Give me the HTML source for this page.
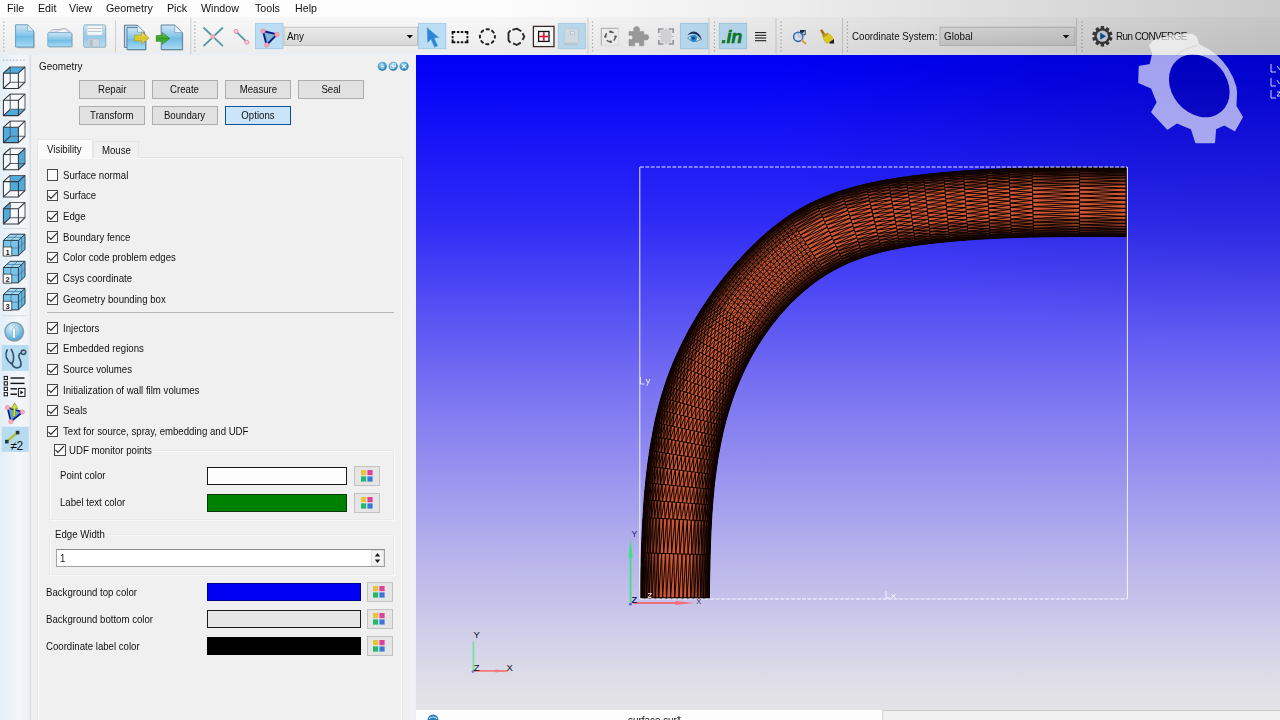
<!DOCTYPE html>
<html><head><meta charset="utf-8">
<style>
*{box-sizing:border-box;margin:0;padding:0}
html,body{width:1280px;height:720px;overflow:hidden;background:#f0f0f0}
body{font-family:"Liberation Sans",sans-serif;font-size:11px;color:#111;position:relative}
.abs{position:absolute}
.t{position:absolute;white-space:nowrap;line-height:12px;height:12px;transform:scaleX(.875);transform-origin:0 0}
#menubar{left:0;top:0;width:1280px;height:17px;background:#fdfdfd}
#toolbar{left:0;top:17px;width:1280px;height:38px;background:linear-gradient(#f7f7f7,#ececec)}
#shade{left:0;top:0;width:1280px;height:55px;background:linear-gradient(90deg,rgba(0,0,0,0) 0%,rgba(0,0,0,0) 38%,rgba(0,0,0,.06) 60%,rgba(0,0,0,.15) 85%,rgba(0,0,0,.2) 100%);pointer-events:none}
#sidebar{left:0;top:55px;width:31px;height:665px;background:linear-gradient(90deg,#e4eef7,#f3f7fb 60%,#eef1f4)}
#panel{left:31px;top:55px;width:385px;height:665px;background:#f0f0f0}
#viewport{left:416px;top:55px;width:864px;height:655px;background:radial-gradient(ellipse 520px 300px at 100% 0%,rgba(0,0,30,.2),rgba(0,0,30,.1) 50%,rgba(0,0,30,0) 100%),linear-gradient(#0000f6 0%,#0504f7 4%,#2e2af6 25%,#766ff2 50%,#b4b0ec 75%,#dcdbe8 94%,#e4e4e6 100%);overflow:hidden}
.btn{position:absolute;width:66px;height:19px;background:#e1e1e1;border:1px solid #adadad;text-align:center;line-height:17px}
.btn span{display:inline-block;transform:scaleX(.875)}
.btn.on{background:#cce4f7;border:1px solid #005499}
.hl{position:absolute;background:#cce4f7;border:1px solid #99c9ef}
.cb{position:absolute;width:11.5px;height:11.5px;background:#fafafa;border:1px solid #4a4a4a}
.sw{position:absolute;height:17.6px;border:1px solid #1a1a1a}
.cbtn{position:absolute;width:24px;height:19px;background:#e5e5e5;border:1px solid #c2c2c2}
.sep{position:absolute;width:1px;background:#c8c8c8}
.dots{position:absolute;width:1px;border-left:1px dotted #9a9a9a}
</style></head><body>
<div id="menubar" class="abs"></div>
<div id="toolbar" class="abs"></div>
<div id="sidebar" class="abs"></div>
<div id="panel" class="abs"></div>
<div id="viewport" class="abs"></div>
<div class="t" style="left:7px;top:1.5px;font-size:11.6px;transform:scaleX(.92)">File</div>
<div class="t" style="left:38px;top:1.5px;font-size:11.6px;transform:scaleX(.92)">Edit</div>
<div class="t" style="left:69px;top:1.5px;font-size:11.6px;transform:scaleX(.92)">View</div>
<div class="t" style="left:106px;top:1.5px;font-size:11.6px;transform:scaleX(.92)">Geometry</div>
<div class="t" style="left:167px;top:1.5px;font-size:11.6px;transform:scaleX(.92)">Pick</div>
<div class="t" style="left:201px;top:1.5px;font-size:11.6px;transform:scaleX(.92)">Window</div>
<div class="t" style="left:255px;top:1.5px;font-size:11.6px;transform:scaleX(.92)">Tools</div>
<div class="t" style="left:295px;top:1.5px;font-size:11.6px;transform:scaleX(.92)">Help</div>


<svg class="abs" style="left:0;top:0" width="1280" height="56" viewBox="0 0 1280 56">
<defs>
<linearGradient id="gdoc" x1="0" y1="0" x2="0" y2="1"><stop offset="0" stop-color="#cfe6f5"/><stop offset=".5" stop-color="#7fc4ea"/><stop offset=".52" stop-color="#6dbbe6"/><stop offset="1" stop-color="#a9daf3"/></linearGradient>
<linearGradient id="gfl" x1="0" y1="0" x2="0" y2="1"><stop offset="0" stop-color="#d4e6f3"/><stop offset=".5" stop-color="#94cbe9"/><stop offset="1" stop-color="#b5dcf1"/></linearGradient>
<linearGradient id="gcombo" x1="0" y1="0" x2="0" y2="1"><stop offset="0" stop-color="#ebebeb"/><stop offset="1" stop-color="#d6d6d6"/></linearGradient>
<linearGradient id="gyel" x1="0" y1="0" x2="0" y2="1"><stop offset="0" stop-color="#f3e88a"/><stop offset=".5" stop-color="#d8c523"/><stop offset="1" stop-color="#e9dc6a"/></linearGradient>
<linearGradient id="ggrn" x1="0" y1="0" x2="0" y2="1"><stop offset="0" stop-color="#8fd470"/><stop offset=".5" stop-color="#2f9e1e"/><stop offset="1" stop-color="#7ccb5e"/></linearGradient>
</defs>
<!-- toolbar bottom border -->
<rect x="0" y="52" width="1280" height="3" fill="#eceef6"/>
<!-- handle dots -->
<g stroke="#a8a8a8" stroke-width="1.2" stroke-dasharray="1.2 2.4">
<line x1="3.8" y1="21.5" x2="3.8" y2="51.5"/>
<line x1="194.8" y1="21.5" x2="194.8" y2="51.5"/>
<line x1="592.5" y1="21.5" x2="592.5" y2="51.5"/>
<line x1="714.5" y1="21.5" x2="714.5" y2="51.5"/>
<line x1="781" y1="21.5" x2="781" y2="51.5"/>
<line x1="847.5" y1="21.5" x2="847.5" y2="51.5"/>
<line x1="1082" y1="21.5" x2="1082" y2="51.5"/>
</g>
<g stroke="#cfcfcf" stroke-width="1">
<line x1="115.5" y1="20.5" x2="115.5" y2="52.5"/>
<line x1="190.8" y1="18" x2="190.8" y2="54"/>
<line x1="588" y1="18" x2="588" y2="54"/>
<line x1="709" y1="18" x2="709" y2="54"/>
<line x1="776" y1="18" x2="776" y2="54"/>
<line x1="842.5" y1="18" x2="842.5" y2="54"/>
<line x1="1076.5" y1="18" x2="1076.5" y2="54"/>
</g>
<!-- new doc -->
<g>
<path d="M16.5 26 h11.5 l6 6 v15.5 h-17.5z" fill="#5d7d8f" opacity=".45" transform="translate(.8,.8)"/>
<path d="M15.6 24.8 h11.9 l6.2 6.2 v16 h-18.1z" fill="url(#gdoc)" stroke="#6c9db9" stroke-width="1"/>
<path d="M27.5 24.8 v6.2 h6.2z" fill="#e4f1f9" stroke="#7aa7c0" stroke-width=".7"/>
</g>
<!-- open folder -->
<g>
<path d="M48.5 33 l4-3.5 h6 l6.5-1 5 3 v3z" fill="#dcebf5" stroke="#a9a3bd" stroke-width=".8"/>
<path d="M49 34 l16-5.5 5 5.5z" fill="#f4f8fb" stroke="#b8a8c0" stroke-width=".6"/>
<rect x="48.2" y="32.8" width="23.8" height="14" rx="1.2" fill="#5d7d8f" opacity=".4" transform="translate(.7,.8)"/>
<rect x="47.8" y="32.6" width="24" height="14" rx="1.2" fill="url(#gdoc)" stroke="#79a9c6" stroke-width=".9"/>
</g>
<!-- save floppy (disabled look) -->
<g>
<rect x="84.3" y="25.4" width="22" height="22.4" rx="1.5" fill="#7d97a6" opacity=".45"/>
<rect x="83.6" y="24.8" width="22" height="22.4" rx="1.5" fill="url(#gfl)" stroke="#8fb3c8" stroke-width=".9"/>
<rect x="87" y="25.6" width="15.5" height="9.5" fill="#f4f7f9" stroke="#b5c5cf" stroke-width=".6"/>
<line x1="88" y1="28.5" x2="101.5" y2="28.5" stroke="#b9c4cb" stroke-width=".9"/>
<line x1="88" y1="31.5" x2="101.5" y2="31.5" stroke="#b9c4cb" stroke-width=".9"/>
<rect x="88" y="39" width="11.5" height="7.8" fill="#c9d7e0" stroke="#a9bcc8" stroke-width=".6"/>
<rect x="89.5" y="40" width="3.2" height="6" fill="#aebfca"/>
</g>
<!-- import -->
<g>
<path d="M124.4 25.2 h13 l7 7 v15.2 h-20z" fill="#b5d8ee" stroke="#5f7f92" stroke-width="1"/>
<path d="M127 27.8 h12 l7 7 v15 h-19z" fill="#5d7d8f" opacity=".5" transform="translate(.6,.6)"/>
<path d="M127 27.6 h11.6 l7 7 v15 h-18.6z" fill="url(#gdoc)" stroke="#5f8299" stroke-width="1"/>
<path d="M137.4 25.2 v7 h7z" fill="#e9f3fa" stroke="#6f93a8" stroke-width=".6"/>
<path d="M134.6 35.2 h7 v-3 l7.4 5.8 -7.4 5.8 v-3 h-7z" fill="url(#gyel)" stroke="#b3a01a" stroke-width=".8"/>
</g>
<!-- export -->
<g>
<path d="M161.4 25.2 h13.5 l7.6 7.6 v17 h-21.1z" fill="#5d7d8f" opacity=".5" transform="translate(.7,.7)"/>
<path d="M161.2 25 h13.5 l7.6 7.6 v17 h-21.1z" fill="url(#gdoc)" stroke="#5f8299" stroke-width="1"/>
<path d="M174.7 25 v7.6 h7.6z" fill="#e4f1f9" stroke="#6f93a8" stroke-width=".6"/>
<path d="M156.3 35.6 h6 v-3 l7.4 5.8 -7.4 5.8 v-3 h-6z" fill="url(#ggrn)" stroke="#2c8a1d" stroke-width=".8"/>
</g>
<!-- X icon -->
<g stroke="#4f9aa8" stroke-width="1.8" stroke-linecap="round">
<line x1="204" y1="28" x2="222.4" y2="45.6"/><line x1="222.4" y1="28" x2="204" y2="45.6"/>
</g>
<rect x="210.6" y="34.4" width="4.2" height="4.2" fill="#f7a6b6"/>
<!-- line icon -->
<line x1="236" y1="31.4" x2="246.8" y2="42.2" stroke="#4f9aa8" stroke-width="1.8"/>
<circle cx="236" cy="31.4" r="2" fill="#fbd0d8" stroke="#f08aa0" stroke-width="1"/>
<circle cx="246.8" cy="42.2" r="2" fill="#fbd0d8" stroke="#f08aa0" stroke-width="1"/>
<!-- triangle icon hl -->
<rect x="255.5" y="23.4" width="27.5" height="25.2" fill="#bcdef4" stroke="#a3cdeb" stroke-width="1"/>
<path d="M263 31 L277 34.4 L266.6 45z" fill="#7fb5d2" stroke="#0a1a8c" stroke-width="1.9" stroke-linejoin="round"/>
<circle cx="263" cy="31" r="2.3" fill="#f6a6b8" stroke="#ee8098" stroke-width=".6"/>
<circle cx="277" cy="34.4" r="2.3" fill="#f6a6b8" stroke="#ee8098" stroke-width=".6"/>
<circle cx="266.6" cy="45" r="2.3" fill="#f6a6b8" stroke="#ee8098" stroke-width=".6"/>
<!-- combo Any -->
<rect x="284" y="27.2" width="133.5" height="18.3" fill="url(#gcombo)" stroke="#c2c2c2" stroke-width="1"/>
<path d="M406.6 35 h6.4 l-3.2 3.4z" fill="#111"/>

<!-- pointer hl -->
<rect x="418.5" y="23.4" width="27.3" height="25.2" fill="#bcdef4" stroke="#a3cdeb" stroke-width="1"/>
<path d="M427.2 27.8 L427.6 42.4 L431 39.2 L434.6 47.2 L437.6 45.8 L434 38 L438.6 37.6z" fill="#2b84d6" stroke="#4b9ade" stroke-width=".6"/>
<!-- dashed rect -->
<g fill="none" stroke="#111" stroke-width="1.9">
<path d="M452.600 34.600 V32 H455.300 M464.700 32 H467.400 V34.600 M467.400 39.600 V42.200 H464.700 M455.300 42.200 H452.600 V39.600"/>
<path d="M456.900 32 H459.300 M460.800 32 H463.200 M456.900 42.200 H459.300 M460.800 42.200 H463.200 M452.600 36 V38.200 M467.400 36 V38.200"/>
</g>
<!-- dashed circle -->
<circle cx="487.400" cy="36.700" r="7.500" fill="none" stroke="#1c1c1c" stroke-width="1.900" stroke-dasharray="3.850 2.040" stroke-dashoffset="1.900"/>
<!-- dashed polygon -->
<g fill="none" stroke="#262626" stroke-width="1.850" stroke-linejoin="round">
<path d="M510.500 30.400 L508.500 32.800 V40.300 L510.500 42.700"/>
<path d="M512.400 29.900 L516.800 28.600 L521.300 31.200"/>
<path d="M522.500 33.200 L524.300 36.600 L522.500 40"/>
<path d="M513.100 43.300 L516.800 45 L520.800 42.600"/>
</g>
<!-- red cross box -->
<rect x="533.4" y="26.4" width="20.6" height="20.2" fill="#fbfbfb" stroke="#3a2a22" stroke-width="1.3"/>
<g stroke="#c9c9c9" stroke-width=".6"><line x1="534" y1="27" x2="538.5" y2="31.5"/><line x1="553.4" y1="27" x2="549" y2="31.5"/><line x1="534" y1="46" x2="538.5" y2="41.4"/><line x1="553.4" y1="46" x2="549" y2="41.4"/></g>
<rect x="538.6" y="31.5" width="10.4" height="9.9" fill="#fff" stroke="#111" stroke-width="1.3"/>
<line x1="543.8" y1="32.2" x2="543.8" y2="40.8" stroke="#e8123c" stroke-width="1.7"/><line x1="539.3" y1="36.5" x2="548.3" y2="36.5" stroke="#e8123c" stroke-width="1.7"/>
<!-- disabled hl -->
<rect x="558.3" y="23.4" width="27.3" height="25.2" fill="#bcdaee" stroke="#a9cfe9" stroke-width="1"/>
<path d="M565 30 q.5-1.6 2-1.6 h9 q2 0 2.2 2 l.6 13 q0 1.6 -1.6 1.6 h-12 q-1.6 0 -1.4-1.6z" fill="#d3dde6" stroke="#b9c9d6" stroke-width=".7"/>
<rect x="570.6" y="31.2" width="3.6" height="3" fill="#e9eff4" stroke="#a9b6c2" stroke-width=".6"/>
<rect x="564" y="42.6" width="13.5" height="2.4" fill="#b5c7d5" opacity=".8"/>
<!-- rotate gray -->
<path d="M601.3 45.4 V28.3 H618.6" fill="none" stroke="#a3a3a3" stroke-width="1"/>
<rect x="601.8" y="28.8" width="16.8" height="16.6" fill="#efefef" opacity=".7"/>
<path d="M601.8 45.4 H618.6 V28.8" fill="none" stroke="#dcdcdc" stroke-width=".8"/>
<g fill="none" stroke="#5e5e5e" stroke-width="1.5" stroke-dasharray="4.2 3.2"><circle cx="610.4" cy="36.8" r="5"/></g>
<g fill="#5a5a5a"><circle cx="605.4" cy="36.6" r="1.2"/><circle cx="615.6" cy="36.6" r="1.2"/><circle cx="610.4" cy="31.8" r="1.2"/><circle cx="610.8" cy="41.8" r="1.2"/></g>
<!-- puzzle -->
<path d="M629 31.6 h5 q-1.6-4.6 2.6-5 q4.2.4 2.6 5 h4.6 v3.4 q4.6-1.6 5 2.2 q-.4 4 -5 2.4 v6.2 h-4.4 q1.2-3.4 -2.4-3.6 q-3.4.2 -2.2 3.6 h-5.8 v-6.6 q3.6 1.4 3.8-1.8 q-.2-3.2 -3.8-1.8z" fill="#9d9d9d" stroke="#8f8f8f" stroke-width=".5"/>
<!-- dashed gray -->
<rect x="660.4" y="30.2" width="11" height="12.4" fill="#d9d9dd"/>
<g fill="none" stroke="#9c98a4" stroke-width="1.7"><path d="M658.8 33 v-4 h4.6"/><path d="M668.6 29 h4.6 v4"/><path d="M673.2 40 v4 h-4.6"/><path d="M663.4 44 h-4.6 v-4"/></g>
<g stroke="#b9b6c0" stroke-width="1"><line x1="666" y1="28.6" x2="666" y2="31"/><line x1="666" y1="42" x2="666" y2="44.4"/><line x1="658.6" y1="36.5" x2="660.6" y2="36.5"/><line x1="671.4" y1="36.5" x2="673.6" y2="36.5"/></g>
<!-- eye hl -->
<rect x="680.4" y="23.4" width="27.4" height="25.2" fill="#bcdef4" stroke="#a3cdeb" stroke-width="1"/>
<path d="M687.6 38.2 q6.4-5.6 12.6 1.4 q-6 4.6 -12.6-1.4z" fill="#eef6fb" stroke="#3b6f9e" stroke-width=".7"/>
<circle cx="693.6" cy="38.4" r="3.3" fill="#1d8ddc"/><circle cx="693.4" cy="38.2" r="1.3" fill="#0c3a6c"/>
<path d="M687.4 35.4 q4-5.4 9.2-3.2 q4.4 2.4 5.2 8.600 q-1.600-4.200 -5.200-6 q-4.800-2.200 -9.200.6z" fill="#1a3560"/>
<!-- .in hl -->
<rect x="719.3" y="23.4" width="27.4" height="25.2" fill="#bcdef4" stroke="#a3cdeb" stroke-width="1"/>
<text x="721.6" y="43.3" font-family="Liberation Sans" font-weight="bold" font-style="italic" font-size="18" fill="#0b7a2c" stroke="#0b7a2c" stroke-width=".5" letter-spacing="-.2">.in</text>
<!-- menu lines -->
<g stroke="#151515" stroke-width="1.05"><line x1="755" y1="32.6" x2="766.2" y2="32.6"/><line x1="755" y1="35.3" x2="766.2" y2="35.3"/><line x1="755" y1="38" x2="766.2" y2="38"/><line x1="755" y1="40.700" x2="766.2" y2="40.700"/></g>
<!-- search -->
<rect x="800" y="30" width="5.6" height="5.2" fill="#1e2a3c"/>
<path d="M801 34.600 l3.800-3.800 v3.800z" fill="#bcd4ea"/>
<circle cx="798.2" cy="36.800" r="4.600" fill="#e6eef8" fill-opacity=".85" stroke="#2b6cc9" stroke-width="1.5"/>
<path d="M798.200 32.400 v4.400 h4.400" fill="none" stroke="#9fb9dc" stroke-width=".8"/>
<line x1="801.800" y1="40.200" x2="805.600" y2="43.400" stroke="#e9a44a" stroke-width="1.900" stroke-linecap="round"/>
<!-- broom -->
<path d="M829.500 39 l4.500 0 0 4.500 -4.500 0z" fill="#16161e"/>
<path d="M820 30.200 l2.200-1 3 4.800 -2.400 1.200z" fill="#b8741c"/>
<path d="M822.400 35.400 l4.800-2.400 q4.600 1.600 6.200 6.400 l-6.600 4.200 q-3.400-3.400 -4.400-8.200z" fill="#e9da22" stroke="#cdb81a" stroke-width=".6"/>
<path d="M822.600 35.600 l4.600-2.400 1 1.400 -4.800 2.600z" fill="#c99a1c"/>
<!-- coord combo -->
<rect x="940" y="27.200" width="135" height="18.300" fill="url(#gcombo)" stroke="#c2c2c2" stroke-width="1"/>
<path d="M1062.800 35 h6.400 l-3.200 3.400z" fill="#111"/>
<!-- run gear -->
<g transform="translate(1102.400,36.200)">
<g fill="#3f3f3f">
<circle r="8" />
<rect x="-1.7" y="-10.2" width="3.4" height="3.6" rx=".5" transform="rotate(0)"/><rect x="-1.7" y="-10.2" width="3.4" height="3.6" rx=".5" transform="rotate(36)"/><rect x="-1.7" y="-10.2" width="3.4" height="3.6" rx=".5" transform="rotate(72)"/><rect x="-1.7" y="-10.2" width="3.4" height="3.6" rx=".5" transform="rotate(108)"/><rect x="-1.7" y="-10.2" width="3.4" height="3.6" rx=".5" transform="rotate(144)"/><rect x="-1.7" y="-10.2" width="3.4" height="3.6" rx=".5" transform="rotate(180)"/><rect x="-1.7" y="-10.2" width="3.4" height="3.6" rx=".5" transform="rotate(216)"/><rect x="-1.7" y="-10.2" width="3.4" height="3.6" rx=".5" transform="rotate(252)"/><rect x="-1.7" y="-10.2" width="3.4" height="3.6" rx=".5" transform="rotate(288)"/><rect x="-1.7" y="-10.2" width="3.4" height="3.6" rx=".5" transform="rotate(324)"/>
</g>
<circle r="5.600" fill="#dfeaf4"/>
<path d="M-2.200 -3.600 L3.600 0 L-2.200 3.600z" fill="#155a9e"/>
</g>

</svg>
<div class="t" style="left:287px;top:29.9px;font-size:10.7px;transform:scaleX(.925)">Any</div>
<div class="t" style="left:852px;top:29.9px;font-size:10.7px;transform:scaleX(.91)">Coordinate System:</div>
<div class="t" style="left:943.500px;top:29.9px;font-size:10.7px;transform:scaleX(.925)">Global</div>
<div class="t" style="left:1116px;top:29.9px;font-size:10.7px;transform:scaleX(.925);letter-spacing:-.6px">Run CONVERGE</div>


<svg class="abs" style="left:0;top:55px" width="32" height="665" viewBox="0 55 32 665">
<defs><radialGradient id="ginfo" cx=".4" cy=".3" r=".8"><stop offset="0" stop-color="#e9f5fc"/><stop offset=".5" stop-color="#8ccaea"/><stop offset="1" stop-color="#3f9bd0"/></radialGradient></defs><line x1="30.3" y1="55" x2="30.3" y2="720" stroke="#d3dbe3" stroke-width="1.2"/><line x1="3" y1="60.2" x2="27" y2="60.2" stroke="#a9adb2" stroke-width="1.2" stroke-dasharray="1.2 2.2"/><polygon points="3.4,73.2 10.2,67.0 25.0,67.0 25.0,82.2 18.4,88.5 3.4,88.5" fill="#f7fafc" fill-opacity=".8"/><polygon points="3.4,73.2 10.2,67.0 25.0,67.0 18.4,73.2" fill="#4fabdc"/><g fill="none" stroke="#33373b" stroke-width="1.05" stroke-linejoin="round"><polygon points="10.2,67.0 25.0,67.0 25.0,82.2 10.2,82.2" stroke="#5a6066"/><polygon points="3.4,73.2 18.4,73.2 18.4,88.5 3.4,88.5"/><line x1="3.4" y1="73.2" x2="10.2" y2="67.0"/><line x1="18.4" y1="73.2" x2="25.0" y2="67.0"/><line x1="18.4" y1="88.5" x2="25.0" y2="82.2"/><line x1="3.4" y1="88.5" x2="10.2" y2="82.2"/></g>
<polygon points="3.4,100.3 10.2,94.1 25.0,94.1 25.0,109.3 18.4,115.6 3.4,115.6" fill="#f7fafc" fill-opacity=".8"/><polygon points="3.4,115.6 10.2,109.3 25.0,109.3 18.4,115.6" fill="#4fabdc"/><g fill="none" stroke="#33373b" stroke-width="1.05" stroke-linejoin="round"><polygon points="10.2,94.1 25.0,94.1 25.0,109.3 10.2,109.3" stroke="#5a6066"/><polygon points="3.4,100.3 18.4,100.3 18.4,115.6 3.4,115.6"/><line x1="3.4" y1="100.3" x2="10.2" y2="94.1"/><line x1="18.4" y1="100.3" x2="25.0" y2="94.1"/><line x1="18.4" y1="115.6" x2="25.0" y2="109.3"/><line x1="3.4" y1="115.6" x2="10.2" y2="109.3"/></g>
<polygon points="3.4,127.3 10.2,121.1 25.0,121.1 25.0,136.3 18.4,142.6 3.4,142.6" fill="#f7fafc" fill-opacity=".8"/><polygon points="3.4,127.3 18.4,127.3 18.4,142.6 3.4,142.6" fill="#4fabdc"/><g fill="none" stroke="#33373b" stroke-width="1.05" stroke-linejoin="round"><polygon points="10.2,121.1 25.0,121.1 25.0,136.3 10.2,136.3" stroke="#5a6066"/><polygon points="3.4,127.3 18.4,127.3 18.4,142.6 3.4,142.6"/><line x1="3.4" y1="127.3" x2="10.2" y2="121.1"/><line x1="18.4" y1="127.3" x2="25.0" y2="121.1"/><line x1="18.4" y1="142.6" x2="25.0" y2="136.3"/><line x1="3.4" y1="142.6" x2="10.2" y2="136.3"/></g>
<polygon points="3.4,154.5 10.2,148.3 25.0,148.3 25.0,163.5 18.4,169.8 3.4,169.8" fill="#f7fafc" fill-opacity=".8"/><polygon points="18.4,154.5 25.0,148.3 25.0,163.5 18.4,169.8" fill="#4fabdc"/><g fill="none" stroke="#33373b" stroke-width="1.05" stroke-linejoin="round"><polygon points="10.2,148.3 25.0,148.3 25.0,163.5 10.2,163.5" stroke="#5a6066"/><polygon points="3.4,154.5 18.4,154.5 18.4,169.8 3.4,169.8"/><line x1="3.4" y1="154.5" x2="10.2" y2="148.3"/><line x1="18.4" y1="154.5" x2="25.0" y2="148.3"/><line x1="18.4" y1="169.8" x2="25.0" y2="163.5"/><line x1="3.4" y1="169.8" x2="10.2" y2="163.5"/></g>
<polygon points="3.4,181.6 10.2,175.4 25.0,175.4 25.0,190.6 18.4,196.9 3.4,196.9" fill="#f7fafc" fill-opacity=".8"/><polygon points="10.2,175.4 25.0,175.4 25.0,190.6 10.2,190.6" fill="#4fabdc"/><g fill="none" stroke="#33373b" stroke-width="1.05" stroke-linejoin="round"><polygon points="10.2,175.4 25.0,175.4 25.0,190.6 10.2,190.6" stroke="#5a6066"/><polygon points="3.4,181.6 18.4,181.6 18.4,196.9 3.4,196.9"/><line x1="3.4" y1="181.6" x2="10.2" y2="175.4"/><line x1="18.4" y1="181.6" x2="25.0" y2="175.4"/><line x1="18.4" y1="196.9" x2="25.0" y2="190.6"/><line x1="3.4" y1="196.9" x2="10.2" y2="190.6"/></g>
<polygon points="3.4,208.7 10.2,202.5 25.0,202.5 25.0,217.7 18.4,224.0 3.4,224.0" fill="#f7fafc" fill-opacity=".8"/><polygon points="3.4,208.7 10.2,202.5 10.2,217.7 3.4,224.0" fill="#4fabdc"/><g fill="none" stroke="#33373b" stroke-width="1.05" stroke-linejoin="round"><polygon points="10.2,202.5 25.0,202.5 25.0,217.7 10.2,217.7" stroke="#5a6066"/><polygon points="3.4,208.7 18.4,208.7 18.4,224.0 3.4,224.0"/><line x1="3.4" y1="208.7" x2="10.2" y2="202.5"/><line x1="18.4" y1="208.7" x2="25.0" y2="202.5"/><line x1="18.4" y1="224.0" x2="25.0" y2="217.7"/><line x1="3.4" y1="224.0" x2="10.2" y2="217.7"/></g>
<line x1="3" y1="228.5" x2="27" y2="228.5" stroke="#d5d9dd" stroke-width="1"/><polygon points="3.4,240.4 10.2,234.2 25.0,234.2 25.0,249.4 18.4,255.7 3.4,255.7" fill="#7cc4ea"/><polygon points="3.4,240.4 10.2,234.2 25.0,234.2 18.4,240.4" fill="#a5d9f2"/><polygon points="18.4,240.4 25.0,234.2 25.0,249.4 18.4,255.7" fill="#66b6e0"/><g fill="none" stroke="#3a7296" stroke-width=".7"><line x1="10.9" y1="240.39999999999998" x2="10.9" y2="255.7"/><line x1="3.4" y1="248.0" x2="18.4" y2="248.0"/><line x1="6.8" y1="237.29999999999998" x2="21.7" y2="237.29999999999998"/><line x1="10.9" y1="240.39999999999998" x2="17.7" y2="234.2"/><line x1="21.7" y1="237.29999999999998" x2="21.7" y2="252.6"/><line x1="18.4" y1="248.0" x2="25.0" y2="241.79999999999998"/></g><g fill="none" stroke="#2f3f4a" stroke-width="1" stroke-linejoin="round"><polygon points="3.4,240.4 10.2,234.2 25.0,234.2 25.0,249.4 18.4,255.7 3.4,255.7"/><polyline points="3.4,240.4 18.4,240.4 18.4,255.7"/><line x1="18.4" y1="240.39999999999998" x2="25.0" y2="234.2"/></g><rect x="3.1999999999999997" y="247.0" width="8.6" height="9" fill="#fff" stroke="#3a3a3a" stroke-width=".8"/><text x="7.5" y="254.5" font-family="Liberation Sans" font-weight="bold" font-size="7.5" text-anchor="middle" fill="#222">1</text>
<polygon points="3.4,267.5 10.2,261.3 25.0,261.3 25.0,276.5 18.4,282.8 3.4,282.8" fill="#7cc4ea"/><polygon points="3.4,267.5 10.2,261.3 25.0,261.3 18.4,267.5" fill="#a5d9f2"/><polygon points="18.4,267.5 25.0,261.3 25.0,276.5 18.4,282.8" fill="#66b6e0"/><g fill="none" stroke="#3a7296" stroke-width=".7"><line x1="10.9" y1="267.5" x2="10.9" y2="282.8"/><line x1="3.4" y1="275.1" x2="18.4" y2="275.1"/><line x1="6.8" y1="264.40000000000003" x2="21.7" y2="264.40000000000003"/><line x1="10.9" y1="267.5" x2="17.7" y2="261.3"/><line x1="21.7" y1="264.40000000000003" x2="21.7" y2="279.7"/><line x1="18.4" y1="275.1" x2="25.0" y2="268.90000000000003"/></g><g fill="none" stroke="#2f3f4a" stroke-width="1" stroke-linejoin="round"><polygon points="3.4,267.5 10.2,261.3 25.0,261.3 25.0,276.5 18.4,282.8 3.4,282.8"/><polyline points="3.4,267.5 18.4,267.5 18.4,282.8"/><line x1="18.4" y1="267.5" x2="25.0" y2="261.3"/></g><rect x="3.1999999999999997" y="274.1" width="8.6" height="9" fill="#fff" stroke="#3a3a3a" stroke-width=".8"/><text x="7.5" y="281.6" font-family="Liberation Sans" font-weight="bold" font-size="7.5" text-anchor="middle" fill="#222">2</text>
<polygon points="3.4,294.6 10.2,288.4 25.0,288.4 25.0,303.6 18.4,309.9 3.4,309.9" fill="#7cc4ea"/><polygon points="3.4,294.6 10.2,288.4 25.0,288.4 18.4,294.6" fill="#a5d9f2"/><polygon points="18.4,294.6 25.0,288.4 25.0,303.6 18.4,309.9" fill="#66b6e0"/><g fill="none" stroke="#3a7296" stroke-width=".7"><line x1="10.9" y1="294.59999999999997" x2="10.9" y2="309.9"/><line x1="3.4" y1="302.2" x2="18.4" y2="302.2"/><line x1="6.8" y1="291.5" x2="21.7" y2="291.5"/><line x1="10.9" y1="294.59999999999997" x2="17.7" y2="288.4"/><line x1="21.7" y1="291.5" x2="21.7" y2="306.79999999999995"/><line x1="18.4" y1="302.2" x2="25.0" y2="296.0"/></g><g fill="none" stroke="#2f3f4a" stroke-width="1" stroke-linejoin="round"><polygon points="3.4,294.6 10.2,288.4 25.0,288.4 25.0,303.6 18.4,309.9 3.4,309.9"/><polyline points="3.4,294.6 18.4,294.6 18.4,309.9"/><line x1="18.4" y1="294.59999999999997" x2="25.0" y2="288.4"/></g><rect x="3.1999999999999997" y="301.2" width="8.6" height="9" fill="#fff" stroke="#3a3a3a" stroke-width=".8"/><text x="7.5" y="308.7" font-family="Liberation Sans" font-weight="bold" font-size="7.5" text-anchor="middle" fill="#222">3</text>
<line x1="3" y1="315.8" x2="27" y2="315.8" stroke="#d5d9dd" stroke-width="1"/><circle cx="14.4" cy="332" r="9.9" fill="#6f8a99" opacity=".55"/><circle cx="14.100" cy="331.500" r="9.200" fill="url(#ginfo)" stroke="#7f99a6" stroke-width="1.100"/><rect x="12.600" y="328" width="2.900" height="10" rx=".8" fill="#fbfdfe" stroke="#5a9ac4" stroke-width=".5"/><circle cx="14" cy="325.400" r="1.600" fill="#fbfdfe" stroke="#5a9ac4" stroke-width=".5"/><rect x="1.7" y="345" width="27" height="25.8" fill="#b7dbf1"/><g fill="none" stroke="#35566e" stroke-width="1.7" stroke-linecap="round"><path d="M7.100 350 C4.800 354.500 6 360 12 364"/><path d="M11.300 349.600 C14 353.500 14.500 360 12 364"/><path d="M12 364 C13 367.500 17 369 20 366.900 C22.800 364 20 360.300 18.900 356.900 C18.500 354.600 19.800 353.200 21.300 353"/><circle cx="23.500" cy="352.300" r="2.200" fill="#b9d3e3"/></g><circle cx="24.500" cy="351.300" r=".8" fill="#e87a9a"/><rect x="4.200" y="376.4" width="3.200" height="3.200" fill="#fff" stroke="#111" stroke-width="1"/><line x1="10.500" y1="378" x2="24.5" y2="378" stroke="#111" stroke-width="1.400"/><rect x="4.200" y="381.79999999999995" width="3.200" height="3.200" fill="#fff" stroke="#111" stroke-width="1"/><line x1="10.500" y1="383.4" x2="24.5" y2="383.4" stroke="#111" stroke-width="1.400"/><rect x="4.200" y="387.2" width="3.200" height="3.200" fill="#fff" stroke="#111" stroke-width="1"/><line x1="10.500" y1="388.8" x2="17" y2="388.8" stroke="#111" stroke-width="1.400"/><rect x="4.200" y="392.59999999999997" width="3.200" height="3.200" fill="#fff" stroke="#111" stroke-width="1"/><line x1="10.500" y1="394.2" x2="17" y2="394.2" stroke="#111" stroke-width="1.400"/><rect x="18.400" y="388.400" width="6.600" height="8" fill="#fff" stroke="#111" stroke-width="1"/><path d="M20.400 390.200 l3 2.200 -3 2.200z" fill="#111"/><path d="M7.500 407.600 L22.500 412 L10.900 421.600z" fill="#6aa6cf" stroke="#0a1a8c" stroke-width="1.800" stroke-linejoin="round"/><path d="M12.800 416.500 l0.600-8 -2.200 0 3.600-5.600 3 5.600 -2.200 0 -0.400 8z" fill="#d9e03a" stroke="#6f9a2a" stroke-width=".7"/><circle cx="7.5" cy="407.6" r="2.300" fill="#f8aebd" stroke="#ee8098" stroke-width=".5"/><circle cx="22.5" cy="412" r="2.300" fill="#f8aebd" stroke="#ee8098" stroke-width=".5"/><circle cx="10.9" cy="421.6" r="2.300" fill="#f8aebd" stroke="#ee8098" stroke-width=".5"/><rect x="1.700" y="426.700" width="27" height="25.200" fill="#b7dbf1"/><line x1="7" y1="441.600" x2="17.400" y2="432.600" stroke="#b9d24a" stroke-width="2.600"/><line x1="7" y1="441.600" x2="17.400" y2="432.600" stroke="#6f9a2a" stroke-width=".6"/><rect x="5" y="439.800" width="3.600" height="3.600" fill="#27384a"/><rect x="15.800" y="430.800" width="3.600" height="3.600" fill="#27384a"/><text x="10.400" y="450.200" font-family="Liberation Sans" font-size="12" fill="#111" letter-spacing="-.6">≠2</text></svg>

<div class="t" style="left:39px;top:60.2px;font-size:10.7px;transform:scaleX(.925)">Geometry</div>
<svg class="abs" style="left:376px;top:60px" width="36" height="13" viewBox="376 60 36 13">
<defs><radialGradient id="gtb" cx=".4" cy=".3" r=".8"><stop offset="0" stop-color="#9fd3ea"/><stop offset=".6" stop-color="#3f95c4"/><stop offset="1" stop-color="#2a78a8"/></radialGradient></defs>
<circle cx="382.3" cy="66.3" r="4.6" fill="url(#gtb)"/><circle cx="393.2" cy="66.3" r="4.600" fill="url(#gtb)"/><circle cx="404.100" cy="66.300" r="4.600" fill="url(#gtb)"/>
<path d="M380.600 65 h3.600 m-3.600 1.500 h3.600 m-3.600 1.500 h3.600" stroke="#e6f3fa" stroke-width=".8" fill="none"/>
<rect x="390.800" y="65.200" width="3.200" height="3" fill="none" stroke="#eef7fb" stroke-width=".8"/><rect x="392.400" y="63.800" width="3.200" height="3" fill="none" stroke="#eef7fb" stroke-width=".8"/>
<path d="M402 64.200 l4.200 4.200 m0-4.200 l-4.200 4.200" stroke="#f2f9fc" stroke-width="1.100" fill="none"/>
</svg>
<div class="btn" style="left:79px;top:80px"><span>Repair</span></div>
<div class="btn" style="left:152px;top:80px"><span>Create</span></div>
<div class="btn" style="left:225px;top:80px"><span>Measure</span></div>
<div class="btn" style="left:298px;top:80px"><span>Seal</span></div>
<div class="btn" style="left:79px;top:106px"><span>Transform</span></div>
<div class="btn" style="left:152px;top:106px"><span>Boundary</span></div>
<div class="btn on" style="left:225px;top:106px"><span>Options</span></div>
<div class="abs" style="left:37px;top:157px;width:366px;height:570px;border:1px solid #e4e4e4;border-top-color:#e0e0e0;background:#f0f0f0;box-shadow:inset 1px 1px 0 #fbfbfb,inset -1px 0 0 #fbfbfb"></div>
<div class="abs" style="left:93px;top:141px;width:46px;height:16.5px;background:#f0f0f0;border:1px solid #e5e5e5;border-bottom:none"></div>
<div class="abs" style="left:37px;top:139px;width:56px;height:19.5px;background:#fbfbfb;border:1px solid #e6e6e6;border-bottom:none"></div>
<div class="t" style="left:47px;top:143px">Visibility</div>
<div class="t" style="left:101.5px;top:144px">Mouse</div>
<div class="cb" style="left:46.8px;top:169.2px"></div><div class="t" style="left:62.5px;top:168.7px">Surface normal</div>
<div class="cb" style="left:46.8px;top:189.8px"><svg width="10" height="10" viewBox="0 0 10 10" style="position:absolute;left:0;top:0"><path d="M0.400 4.900 L2.900 7.400 L9 1.200" fill="none" stroke="#2a2a2a" stroke-width="1.150"/></svg></div><div class="t" style="left:62.5px;top:189.3px">Surface</div>
<div class="cb" style="left:46.8px;top:210.5px"><svg width="10" height="10" viewBox="0 0 10 10" style="position:absolute;left:0;top:0"><path d="M0.400 4.900 L2.900 7.400 L9 1.200" fill="none" stroke="#2a2a2a" stroke-width="1.150"/></svg></div><div class="t" style="left:62.5px;top:210.0px">Edge</div>
<div class="cb" style="left:46.8px;top:231.2px"><svg width="10" height="10" viewBox="0 0 10 10" style="position:absolute;left:0;top:0"><path d="M0.400 4.900 L2.900 7.400 L9 1.200" fill="none" stroke="#2a2a2a" stroke-width="1.150"/></svg></div><div class="t" style="left:62.5px;top:230.7px">Boundary fence</div>
<div class="cb" style="left:46.8px;top:251.9px"><svg width="10" height="10" viewBox="0 0 10 10" style="position:absolute;left:0;top:0"><path d="M0.400 4.900 L2.900 7.400 L9 1.200" fill="none" stroke="#2a2a2a" stroke-width="1.150"/></svg></div><div class="t" style="left:62.5px;top:251.4px">Color code problem edges</div>
<div class="cb" style="left:46.8px;top:272.5px"><svg width="10" height="10" viewBox="0 0 10 10" style="position:absolute;left:0;top:0"><path d="M0.400 4.900 L2.900 7.400 L9 1.200" fill="none" stroke="#2a2a2a" stroke-width="1.150"/></svg></div><div class="t" style="left:62.5px;top:272.0px">Csys coordinate</div>
<div class="cb" style="left:46.8px;top:293.2px"><svg width="10" height="10" viewBox="0 0 10 10" style="position:absolute;left:0;top:0"><path d="M0.400 4.900 L2.900 7.400 L9 1.200" fill="none" stroke="#2a2a2a" stroke-width="1.150"/></svg></div><div class="t" style="left:62.5px;top:292.7px">Geometry bounding box</div>
<div class="cb" style="left:46.8px;top:322.2px"><svg width="10" height="10" viewBox="0 0 10 10" style="position:absolute;left:0;top:0"><path d="M0.400 4.900 L2.900 7.400 L9 1.200" fill="none" stroke="#2a2a2a" stroke-width="1.150"/></svg></div><div class="t" style="left:62.5px;top:321.7px">Injectors</div>
<div class="cb" style="left:46.8px;top:342.9px"><svg width="10" height="10" viewBox="0 0 10 10" style="position:absolute;left:0;top:0"><path d="M0.400 4.900 L2.900 7.400 L9 1.200" fill="none" stroke="#2a2a2a" stroke-width="1.150"/></svg></div><div class="t" style="left:62.5px;top:342.4px">Embedded regions</div>
<div class="cb" style="left:46.8px;top:363.5px"><svg width="10" height="10" viewBox="0 0 10 10" style="position:absolute;left:0;top:0"><path d="M0.400 4.900 L2.900 7.400 L9 1.200" fill="none" stroke="#2a2a2a" stroke-width="1.150"/></svg></div><div class="t" style="left:62.5px;top:363.0px">Source volumes</div>
<div class="cb" style="left:46.8px;top:384.2px"><svg width="10" height="10" viewBox="0 0 10 10" style="position:absolute;left:0;top:0"><path d="M0.400 4.900 L2.900 7.400 L9 1.200" fill="none" stroke="#2a2a2a" stroke-width="1.150"/></svg></div><div class="t" style="left:62.5px;top:383.7px">Initialization of wall film volumes</div>
<div class="cb" style="left:46.8px;top:404.8px"><svg width="10" height="10" viewBox="0 0 10 10" style="position:absolute;left:0;top:0"><path d="M0.400 4.900 L2.900 7.400 L9 1.200" fill="none" stroke="#2a2a2a" stroke-width="1.150"/></svg></div><div class="t" style="left:62.5px;top:404.3px">Seals</div>
<div class="cb" style="left:46.8px;top:425.5px"><svg width="10" height="10" viewBox="0 0 10 10" style="position:absolute;left:0;top:0"><path d="M0.400 4.900 L2.900 7.400 L9 1.200" fill="none" stroke="#2a2a2a" stroke-width="1.150"/></svg></div><div class="t" style="left:62.5px;top:425.0px">Text for source, spray, embedding and UDF</div>
<div class="abs" style="left:47px;top:312px;width:347px;height:1px;background:#b9b9b9"></div>
<div class="abs" style="left:48.5px;top:450px;width:345px;height:69.5px;border:1px solid #e9e9e9;box-shadow:1px 1px 0 #f8f8f8, inset 1px 1px 0 #f8f8f8"></div>
<div class="abs" style="left:52px;top:443px;width:101px;height:14px;background:#f0f0f0"></div>
<div class="cb" style="left:54px;top:444.2px"><svg width="10" height="10" viewBox="0 0 10 10" style="position:absolute;left:0;top:0"><path d="M0.400 4.900 L2.900 7.400 L9 1.200" fill="none" stroke="#2a2a2a" stroke-width="1.150"/></svg></div><div class="t" style="left:68.5px;top:443.7px">UDF monitor points</div>
<div class="t" style="left:59.5px;top:469.3px">Point color</div>
<div class="t" style="left:59.5px;top:496.4px">Label text color</div>
<div class="sw" style="left:207px;top:467.3px;width:139.8px;background:#fdfdfd"></div>
<div class="sw" style="left:207px;top:494.200px;width:139.800px;background:#008000;border-color:#0a3a0a"></div>
<div class="cbtn" style="left:354px;top:466px;width:25.5px;height:20px"><svg width="12" height="12" viewBox="0 0 12 12" style="position:absolute;left:5.5px;top:2.5px"><rect x="0" y="0" width="5.200" height="5.200" fill="#e8c23a"/><rect x="6.400" y="0" width="5.200" height="5.200" fill="#e0409a"/><rect x="0" y="6.400" width="5.200" height="5.200" fill="#1fba6a"/><rect x="6.400" y="6.400" width="5.200" height="5.200" fill="#3a78d8"/></svg></div>
<div class="cbtn" style="left:354px;top:493px;width:25.500px;height:20px"><svg width="12" height="12" viewBox="0 0 12 12" style="position:absolute;left:5.5px;top:2.5px"><rect x="0" y="0" width="5.200" height="5.200" fill="#e8c23a"/><rect x="6.400" y="0" width="5.200" height="5.200" fill="#e0409a"/><rect x="0" y="6.400" width="5.200" height="5.200" fill="#1fba6a"/><rect x="6.400" y="6.400" width="5.200" height="5.200" fill="#3a78d8"/></svg></div>
<div class="abs" style="left:48.500px;top:533.500px;width:345px;height:41px;border:1px solid #e9e9e9;box-shadow:1px 1px 0 #f8f8f8, inset 1px 1px 0 #f8f8f8"></div>
<div class="abs" style="left:52px;top:527px;width:54px;height:14px;background:#f0f0f0"></div>
<div class="t" style="left:54.500px;top:528.300px">Edge Width</div>
<div class="abs" style="left:55.500px;top:549px;width:329.500px;height:17.500px;background:#fff;border:1px solid #a3a3a3;border-top-color:#8c8c8c"></div>
<div class="t" style="left:60px;top:552.200px">1</div>
<svg class="abs" style="left:371px;top:550px" width="13" height="16" viewBox="0 0 13 16"><rect x=".5" y=".5" width="12" height="15" fill="#f3f3f3" stroke="#cfcfcf" stroke-width=".6"/><path d="M3.800 6.400 L6.500 3 L9.200 6.400z M3.800 9.600 L6.500 13 L9.200 9.600z" fill="#1a1a1a"/></svg>
<div class="t" style="left:46px;top:585.8px">Background top color</div>
<div class="sw" style="left:206.700px;top:583px;width:154.300px;height:18px;background:#0000f2;border-color:#00008a"></div>
<div class="cbtn" style="left:366.800px;top:582.3px;width:26px;height:19.500px"><svg width="12" height="12" viewBox="0 0 12 12" style="position:absolute;left:5.5px;top:2.5px"><rect x="0" y="0" width="5.200" height="5.200" fill="#e8c23a"/><rect x="6.400" y="0" width="5.200" height="5.200" fill="#e0409a"/><rect x="0" y="6.400" width="5.200" height="5.200" fill="#1fba6a"/><rect x="6.400" y="6.400" width="5.200" height="5.200" fill="#3a78d8"/></svg></div>
<div class="t" style="left:46px;top:612.8px">Background bottom color</div>
<div class="sw" style="left:206.700px;top:610px;width:154.300px;height:18px;background:#e6e6e6;border-color:#1a1a1a"></div>
<div class="cbtn" style="left:366.800px;top:609.3px;width:26px;height:19.500px"><svg width="12" height="12" viewBox="0 0 12 12" style="position:absolute;left:5.5px;top:2.5px"><rect x="0" y="0" width="5.200" height="5.200" fill="#e8c23a"/><rect x="6.400" y="0" width="5.200" height="5.200" fill="#e0409a"/><rect x="0" y="6.400" width="5.200" height="5.200" fill="#1fba6a"/><rect x="6.400" y="6.400" width="5.200" height="5.200" fill="#3a78d8"/></svg></div>
<div class="t" style="left:46px;top:639.9px">Coordinate label color</div>
<div class="sw" style="left:206.700px;top:637.1px;width:154.300px;height:18px;background:#000;border-color:#000"></div>
<div class="cbtn" style="left:366.800px;top:636.4px;width:26px;height:19.500px"><svg width="12" height="12" viewBox="0 0 12 12" style="position:absolute;left:5.5px;top:2.5px"><rect x="0" y="0" width="5.200" height="5.200" fill="#e8c23a"/><rect x="6.400" y="0" width="5.200" height="5.200" fill="#e0409a"/><rect x="0" y="6.400" width="5.200" height="5.200" fill="#1fba6a"/><rect x="6.400" y="6.400" width="5.200" height="5.200" fill="#3a78d8"/></svg></div>
<div class="abs" style="left:408.5px;top:55px;width:7.5px;height:665px;background:linear-gradient(90deg,#f0f0f0,#f1f2f6 50%,#eef0f7)"></div>

<svg class="abs" style="left:416px;top:55px" width="864" height="656" viewBox="416 55 864 656">
<g>
<clipPath id="pipeclip"><path d="M640.3 598.0 L640.5 583.4 L640.7 577.5 L640.8 571.6 L641.0 565.7 L641.1 559.6 L641.3 553.5 L641.5 547.6 L641.8 541.6 L642.0 535.4 L642.3 529.4 L642.6 523.2 L643.0 517.2 L643.4 511.0 L643.8 504.9 L644.2 498.8 L644.7 492.6 L645.3 486.4 L645.9 480.2 L646.6 474.0 L647.3 467.8 L648.1 461.6 L649.0 455.2 L649.9 449.1 L651.0 442.7 L652.1 436.6 L653.3 430.2 L654.5 423.9 L655.9 417.6 L657.4 411.4 L659.0 405.1 L660.7 398.9 L662.6 392.5 L664.5 386.4 L666.6 380.1 L668.9 373.8 L671.2 367.8 L673.7 361.6 L676.4 355.5 L679.1 349.7 L682.0 343.6 L684.9 337.9 L687.9 332.1 L691.1 326.2 L694.4 320.6 L697.7 315.0 L701.1 309.5 L704.8 303.9 L708.4 298.5 L712.2 293.1 L716.0 287.9 L720.1 282.4 L724.1 277.3 L728.2 272.3 L732.4 267.3 L736.9 262.2 L741.3 257.4 L745.9 252.4 L750.5 247.8 L755.3 243.1 L760.2 238.4 L765.2 234.0 L770.5 229.5 L775.8 225.2 L781.3 221.1 L787.0 217.1 L793.0 213.1 L798.9 209.5 L805.1 206.0 L811.4 202.8 L817.7 199.9 L824.2 197.1 L830.7 194.5 L837.0 192.3 L843.6 190.1 L850.0 188.2 L856.5 186.4 L863.0 184.7 L869.3 183.3 L875.7 181.9 L882.1 180.7 L888.5 179.5 L894.7 178.5 L901.1 177.5 L907.3 176.7 L913.5 175.8 L919.7 175.1 L925.7 174.4 L931.9 173.7 L938.1 173.1 L944.1 172.5 L950.2 172.0 L956.4 171.5 L962.5 171.0 L968.5 170.6 L974.7 170.2 L980.9 169.8 L986.8 169.5 L993.0 169.2 L998.9 169.0 L1005.0 168.7 L1011.2 168.5 L1017.1 168.3 L1023.3 168.2 L1029.2 168.1 L1035.2 167.9 L1041.3 167.8 L1047.3 167.8 L1053.4 167.7 L1059.4 167.7 L1065.3 167.7 L1071.3 167.6 L1077.2 167.6 L1083.2 167.7 L1089.1 167.7 L1095.1 167.7 L1101.1 167.8 L1107.1 167.8 L1113.1 167.9 L1126.2 167.9 L1126.2 236.6 L1112.6 236.5 L1106.8 236.5 L1100.9 236.5 L1094.9 236.5 L1089.2 236.5 L1083.2 236.5 L1077.4 236.5 L1071.6 236.5 L1065.6 236.6 L1059.9 236.6 L1054.1 236.7 L1048.1 236.8 L1042.4 236.8 L1036.6 237.0 L1030.7 237.1 L1024.9 237.2 L1019.2 237.4 L1013.4 237.6 L1007.7 237.8 L1001.9 238.0 L996.2 238.3 L990.4 238.6 L984.7 238.9 L978.9 239.2 L973.1 239.6 L967.6 240.0 L961.8 240.5 L956.2 240.9 L950.4 241.4 L944.8 242.0 L939.0 242.5 L933.4 243.2 L927.8 243.8 L922.2 244.5 L916.8 245.2 L911.3 246.1 L905.9 246.9 L900.6 247.8 L895.3 248.9 L890.0 250.0 L884.8 251.1 L879.8 252.4 L874.7 253.8 L869.8 255.2 L864.9 256.7 L860.1 258.4 L855.6 260.1 L850.9 261.9 L846.5 263.8 L842.1 265.9 L837.8 268.0 L833.7 270.3 L829.6 272.6 L825.4 275.2 L821.3 277.8 L817.3 280.6 L813.2 283.5 L809.3 286.6 L805.5 289.7 L801.4 293.2 L797.7 296.6 L794.0 300.1 L790.2 303.8 L786.7 307.5 L783.1 311.5 L779.7 315.3 L776.3 319.4 L773.1 323.5 L769.9 327.7 L766.8 332.0 L763.9 336.2 L760.9 340.7 L758.1 345.1 L755.3 349.7 L752.7 354.2 L750.1 358.9 L747.7 363.5 L745.3 368.3 L743.1 373.0 L740.9 377.9 L738.9 382.6 L736.8 387.6 L735.0 392.3 L733.2 397.4 L731.4 402.4 L729.9 407.3 L728.3 412.4 L726.8 417.5 L725.4 422.6 L724.1 427.8 L722.9 433.0 L721.7 438.4 L720.6 443.6 L719.6 449.0 L718.6 454.3 L717.7 459.8 L716.9 465.3 L716.1 470.8 L715.4 476.3 L714.7 481.8 L714.1 487.4 L713.6 492.9 L713.1 498.5 L712.6 504.1 L712.2 509.8 L711.8 515.4 L711.5 521.0 L711.2 526.8 L710.9 532.6 L710.7 538.3 L710.5 544.0 L710.3 549.8 L710.1 555.5 L710.0 561.5 L709.9 567.3 L709.7 573.1 L709.6 579.0 L709.5 585.0 L709.3 598.0Z"/></clipPath>
<path d="M640.3 598.0 L640.5 583.4 L640.7 577.5 L640.8 571.6 L641.0 565.7 L641.1 559.6 L641.3 553.5 L641.5 547.6 L641.8 541.6 L642.0 535.4 L642.3 529.4 L642.6 523.2 L643.0 517.2 L643.4 511.0 L643.8 504.9 L644.2 498.8 L644.7 492.6 L645.3 486.4 L645.9 480.2 L646.6 474.0 L647.3 467.8 L648.1 461.6 L649.0 455.2 L649.9 449.1 L651.0 442.7 L652.1 436.6 L653.3 430.2 L654.5 423.9 L655.9 417.6 L657.4 411.4 L659.0 405.1 L660.7 398.9 L662.6 392.5 L664.5 386.4 L666.6 380.1 L668.9 373.8 L671.2 367.8 L673.7 361.6 L676.4 355.5 L679.1 349.7 L682.0 343.6 L684.9 337.9 L687.9 332.1 L691.1 326.2 L694.4 320.6 L697.7 315.0 L701.1 309.5 L704.8 303.9 L708.4 298.5 L712.2 293.1 L716.0 287.9 L720.1 282.4 L724.1 277.3 L728.2 272.3 L732.4 267.3 L736.9 262.2 L741.3 257.4 L745.9 252.4 L750.5 247.8 L755.3 243.1 L760.2 238.4 L765.2 234.0 L770.5 229.5 L775.8 225.2 L781.3 221.1 L787.0 217.1 L793.0 213.1 L798.9 209.5 L805.1 206.0 L811.4 202.8 L817.7 199.9 L824.2 197.1 L830.7 194.5 L837.0 192.3 L843.6 190.1 L850.0 188.2 L856.5 186.4 L863.0 184.7 L869.3 183.3 L875.7 181.9 L882.1 180.7 L888.5 179.5 L894.7 178.5 L901.1 177.5 L907.3 176.7 L913.5 175.8 L919.7 175.1 L925.7 174.4 L931.9 173.7 L938.1 173.1 L944.1 172.5 L950.2 172.0 L956.4 171.5 L962.5 171.0 L968.5 170.6 L974.7 170.2 L980.9 169.8 L986.8 169.5 L993.0 169.2 L998.9 169.0 L1005.0 168.7 L1011.2 168.5 L1017.1 168.3 L1023.3 168.2 L1029.2 168.1 L1035.2 167.9 L1041.3 167.8 L1047.3 167.8 L1053.4 167.7 L1059.4 167.7 L1065.3 167.7 L1071.3 167.6 L1077.2 167.6 L1083.2 167.7 L1089.1 167.7 L1095.1 167.7 L1101.1 167.8 L1107.1 167.8 L1113.1 167.9 L1126.2 167.9 L1126.2 236.6 L1112.6 236.5 L1106.8 236.5 L1100.9 236.5 L1094.9 236.5 L1089.2 236.5 L1083.2 236.5 L1077.4 236.5 L1071.6 236.5 L1065.6 236.6 L1059.9 236.6 L1054.1 236.7 L1048.1 236.8 L1042.4 236.8 L1036.6 237.0 L1030.7 237.1 L1024.9 237.2 L1019.2 237.4 L1013.4 237.6 L1007.7 237.8 L1001.9 238.0 L996.2 238.3 L990.4 238.6 L984.7 238.9 L978.9 239.2 L973.1 239.6 L967.6 240.0 L961.8 240.5 L956.2 240.9 L950.4 241.4 L944.8 242.0 L939.0 242.5 L933.4 243.2 L927.8 243.8 L922.2 244.5 L916.8 245.2 L911.3 246.1 L905.9 246.9 L900.6 247.8 L895.3 248.9 L890.0 250.0 L884.8 251.1 L879.8 252.4 L874.7 253.8 L869.8 255.2 L864.9 256.7 L860.1 258.4 L855.6 260.1 L850.9 261.9 L846.5 263.8 L842.1 265.9 L837.8 268.0 L833.7 270.3 L829.6 272.6 L825.4 275.2 L821.3 277.8 L817.3 280.6 L813.2 283.5 L809.3 286.6 L805.5 289.7 L801.4 293.2 L797.7 296.6 L794.0 300.1 L790.2 303.8 L786.7 307.5 L783.1 311.5 L779.7 315.3 L776.3 319.4 L773.1 323.5 L769.9 327.7 L766.8 332.0 L763.9 336.2 L760.9 340.7 L758.1 345.1 L755.3 349.7 L752.7 354.2 L750.1 358.9 L747.7 363.5 L745.3 368.3 L743.1 373.0 L740.9 377.9 L738.9 382.6 L736.8 387.6 L735.0 392.3 L733.2 397.4 L731.4 402.4 L729.9 407.3 L728.3 412.4 L726.8 417.5 L725.4 422.6 L724.1 427.8 L722.9 433.0 L721.7 438.4 L720.6 443.6 L719.6 449.0 L718.6 454.3 L717.7 459.8 L716.9 465.3 L716.1 470.8 L715.4 476.3 L714.7 481.8 L714.1 487.4 L713.6 492.9 L713.1 498.5 L712.6 504.1 L712.2 509.8 L711.8 515.4 L711.5 521.0 L711.2 526.8 L710.9 532.6 L710.7 538.3 L710.5 544.0 L710.3 549.8 L710.1 555.5 L710.0 561.5 L709.9 567.3 L709.7 573.1 L709.6 579.0 L709.5 585.0 L709.3 598.0Z" fill="#ca5634"/>
<g clip-path="url(#pipeclip)" fill="none">
<path d="M640.3 598.0 L640.5 583.4 L640.7 577.5 L640.8 571.6 L641.0 565.7 L641.1 559.6 L641.3 553.5 L641.5 547.6 L641.8 541.6 L642.0 535.4 L642.3 529.4 L642.6 523.2 L643.0 517.2 L643.4 511.0 L643.8 504.9 L644.2 498.8 L644.7 492.6 L645.3 486.4 L645.9 480.2 L646.6 474.0 L647.3 467.8 L648.1 461.6 L649.0 455.2 L649.9 449.1 L651.0 442.7 L652.1 436.6 L653.3 430.2 L654.5 423.9 L655.9 417.6 L657.4 411.4 L659.0 405.1 L660.7 398.9 L662.6 392.5 L664.5 386.4 L666.6 380.1 L668.9 373.8 L671.2 367.8 L673.7 361.6 L676.4 355.5 L679.1 349.7 L682.0 343.6 L684.9 337.9 L687.9 332.1 L691.1 326.2 L694.4 320.6 L697.7 315.0 L701.1 309.5 L704.8 303.9 L708.4 298.5 L712.2 293.1 L716.0 287.9 L720.1 282.4 L724.1 277.3 L728.2 272.3 L732.4 267.3 L736.9 262.2 L741.3 257.4 L745.9 252.4 L750.5 247.8 L755.3 243.1 L760.2 238.4 L765.2 234.0 L770.5 229.5 L775.8 225.2 L781.3 221.1 L787.0 217.1 L793.0 213.1 L798.9 209.5 L805.1 206.0 L811.4 202.8 L817.7 199.9 L824.2 197.1 L830.7 194.5 L837.0 192.3 L843.6 190.1 L850.0 188.2 L856.5 186.4 L863.0 184.7 L869.3 183.3 L875.7 181.9 L882.1 180.7 L888.5 179.5 L894.7 178.5 L901.1 177.5 L907.3 176.7 L913.5 175.8 L919.7 175.1 L925.7 174.4 L931.9 173.7 L938.1 173.1 L944.1 172.5 L950.2 172.0 L956.4 171.5 L962.5 171.0 L968.5 170.6 L974.7 170.2 L980.9 169.8 L986.8 169.5 L993.0 169.2 L998.9 169.0 L1005.0 168.7 L1011.2 168.5 L1017.1 168.3 L1023.3 168.2 L1029.2 168.1 L1035.2 167.9 L1041.3 167.8 L1047.3 167.8 L1053.4 167.7 L1059.4 167.7 L1065.3 167.7 L1071.3 167.6 L1077.2 167.6 L1083.2 167.7 L1089.1 167.7 L1095.1 167.7 L1101.1 167.8 L1107.1 167.8 L1113.1 167.9 L1126.2 167.9" stroke="#000" stroke-opacity=".3" stroke-width="36"/>
<path d="M709.3 598.0 L709.5 585.0 L709.6 579.0 L709.7 573.1 L709.9 567.3 L710.0 561.5 L710.1 555.5 L710.3 549.8 L710.5 544.0 L710.7 538.3 L710.9 532.6 L711.2 526.8 L711.5 521.0 L711.8 515.4 L712.2 509.8 L712.6 504.1 L713.1 498.5 L713.6 492.9 L714.1 487.4 L714.7 481.8 L715.4 476.3 L716.1 470.8 L716.9 465.3 L717.7 459.8 L718.6 454.3 L719.6 449.0 L720.6 443.6 L721.7 438.4 L722.9 433.0 L724.1 427.8 L725.4 422.6 L726.8 417.5 L728.3 412.4 L729.9 407.3 L731.4 402.4 L733.2 397.4 L735.0 392.3 L736.8 387.6 L738.9 382.6 L740.9 377.9 L743.1 373.0 L745.3 368.3 L747.7 363.5 L750.1 358.9 L752.7 354.2 L755.3 349.7 L758.1 345.1 L760.9 340.7 L763.9 336.2 L766.8 332.0 L769.9 327.7 L773.1 323.5 L776.3 319.4 L779.7 315.3 L783.1 311.5 L786.7 307.5 L790.2 303.8 L794.0 300.1 L797.7 296.6 L801.4 293.2 L805.5 289.7 L809.3 286.6 L813.2 283.5 L817.3 280.6 L821.3 277.8 L825.4 275.2 L829.6 272.6 L833.7 270.3 L837.8 268.0 L842.1 265.9 L846.5 263.8 L850.9 261.9 L855.6 260.1 L860.1 258.4 L864.9 256.7 L869.8 255.2 L874.7 253.8 L879.8 252.4 L884.8 251.1 L890.0 250.0 L895.3 248.9 L900.6 247.8 L905.9 246.9 L911.3 246.1 L916.8 245.2 L922.2 244.5 L927.8 243.8 L933.4 243.2 L939.0 242.5 L944.8 242.0 L950.4 241.4 L956.2 240.9 L961.8 240.5 L967.6 240.0 L973.1 239.6 L978.9 239.2 L984.7 238.9 L990.4 238.6 L996.2 238.3 L1001.9 238.0 L1007.7 237.8 L1013.4 237.6 L1019.2 237.4 L1024.9 237.2 L1030.7 237.1 L1036.6 237.0 L1042.4 236.8 L1048.1 236.8 L1054.1 236.7 L1059.9 236.6 L1065.6 236.6 L1071.6 236.5 L1077.4 236.5 L1083.2 236.5 L1089.2 236.5 L1094.9 236.5 L1100.9 236.5 L1106.8 236.5 L1112.6 236.5 L1126.2 236.6" stroke="#000" stroke-opacity=".3" stroke-width="36"/>
<path d="M640.3 598.0 L640.5 583.4 L640.7 577.5 L640.8 571.6 L641.0 565.7 L641.1 559.6 L641.3 553.5 L641.5 547.6 L641.8 541.6 L642.0 535.4 L642.3 529.4 L642.6 523.2 L643.0 517.2 L643.4 511.0 L643.8 504.9 L644.2 498.8 L644.7 492.6 L645.3 486.4 L645.9 480.2 L646.6 474.0 L647.3 467.8 L648.1 461.6 L649.0 455.2 L649.9 449.1 L651.0 442.7 L652.1 436.6 L653.3 430.2 L654.5 423.9 L655.9 417.6 L657.4 411.4 L659.0 405.1 L660.7 398.9 L662.6 392.5 L664.5 386.4 L666.6 380.1 L668.9 373.8 L671.2 367.8 L673.7 361.6 L676.4 355.5 L679.1 349.7 L682.0 343.6 L684.9 337.9 L687.9 332.1 L691.1 326.2 L694.4 320.6 L697.7 315.0 L701.1 309.5 L704.8 303.9 L708.4 298.5 L712.2 293.1 L716.0 287.9 L720.1 282.4 L724.1 277.3 L728.2 272.3 L732.4 267.3 L736.9 262.2 L741.3 257.4 L745.9 252.4 L750.5 247.8 L755.3 243.1 L760.2 238.4 L765.2 234.0 L770.5 229.5 L775.8 225.2 L781.3 221.1 L787.0 217.1 L793.0 213.1 L798.9 209.5 L805.1 206.0 L811.4 202.8 L817.7 199.9 L824.2 197.1 L830.7 194.5 L837.0 192.3 L843.6 190.1 L850.0 188.2 L856.5 186.4 L863.0 184.7 L869.3 183.3 L875.7 181.9 L882.1 180.7 L888.5 179.5 L894.7 178.5 L901.1 177.5 L907.3 176.7 L913.5 175.8 L919.7 175.1 L925.7 174.4 L931.9 173.7 L938.1 173.1 L944.1 172.5 L950.2 172.0 L956.4 171.5 L962.5 171.0 L968.5 170.6 L974.7 170.2 L980.9 169.8 L986.8 169.5 L993.0 169.2 L998.9 169.0 L1005.0 168.7 L1011.2 168.5 L1017.1 168.3 L1023.3 168.2 L1029.2 168.1 L1035.2 167.9 L1041.3 167.8 L1047.3 167.8 L1053.4 167.7 L1059.4 167.7 L1065.3 167.7 L1071.3 167.6 L1077.2 167.6 L1083.2 167.7 L1089.1 167.7 L1095.1 167.7 L1101.1 167.8 L1107.1 167.8 L1113.1 167.9 L1126.2 167.9" stroke="#000" stroke-opacity=".42" stroke-width="18"/>
<path d="M709.3 598.0 L709.5 585.0 L709.6 579.0 L709.7 573.1 L709.9 567.3 L710.0 561.5 L710.1 555.5 L710.3 549.8 L710.5 544.0 L710.7 538.3 L710.9 532.6 L711.2 526.8 L711.5 521.0 L711.8 515.4 L712.2 509.8 L712.6 504.1 L713.1 498.5 L713.6 492.9 L714.1 487.4 L714.7 481.8 L715.4 476.3 L716.1 470.8 L716.9 465.3 L717.7 459.8 L718.6 454.3 L719.6 449.0 L720.6 443.6 L721.7 438.4 L722.9 433.0 L724.1 427.8 L725.4 422.6 L726.8 417.5 L728.3 412.4 L729.9 407.3 L731.4 402.4 L733.2 397.4 L735.0 392.3 L736.8 387.6 L738.9 382.6 L740.9 377.9 L743.1 373.0 L745.3 368.3 L747.7 363.5 L750.1 358.9 L752.7 354.2 L755.3 349.7 L758.1 345.1 L760.9 340.7 L763.9 336.2 L766.8 332.0 L769.9 327.7 L773.1 323.5 L776.3 319.4 L779.7 315.3 L783.1 311.5 L786.7 307.5 L790.2 303.8 L794.0 300.1 L797.7 296.6 L801.4 293.2 L805.5 289.7 L809.3 286.6 L813.2 283.5 L817.3 280.6 L821.3 277.8 L825.4 275.2 L829.6 272.6 L833.7 270.3 L837.8 268.0 L842.1 265.9 L846.5 263.8 L850.9 261.9 L855.6 260.1 L860.1 258.4 L864.9 256.7 L869.8 255.2 L874.7 253.8 L879.8 252.4 L884.8 251.1 L890.0 250.0 L895.3 248.9 L900.6 247.8 L905.9 246.9 L911.3 246.1 L916.8 245.2 L922.2 244.5 L927.8 243.8 L933.4 243.2 L939.0 242.5 L944.8 242.0 L950.4 241.4 L956.2 240.9 L961.8 240.5 L967.6 240.0 L973.1 239.6 L978.9 239.2 L984.7 238.9 L990.4 238.6 L996.2 238.3 L1001.9 238.0 L1007.7 237.8 L1013.4 237.6 L1019.2 237.4 L1024.9 237.2 L1030.7 237.1 L1036.6 237.0 L1042.4 236.8 L1048.1 236.8 L1054.1 236.7 L1059.9 236.6 L1065.6 236.6 L1071.6 236.5 L1077.4 236.5 L1083.2 236.5 L1089.2 236.5 L1094.9 236.5 L1100.9 236.5 L1106.8 236.5 L1112.6 236.5 L1126.2 236.6" stroke="#000" stroke-opacity=".42" stroke-width="18"/>
<path d="M640.3 598.0 L640.5 583.4 L640.7 577.5 L640.8 571.6 L641.0 565.7 L641.1 559.6 L641.3 553.5 L641.5 547.6 L641.8 541.6 L642.0 535.4 L642.3 529.4 L642.6 523.2 L643.0 517.2 L643.4 511.0 L643.8 504.9 L644.2 498.8 L644.7 492.6 L645.3 486.4 L645.9 480.2 L646.6 474.0 L647.3 467.8 L648.1 461.6 L649.0 455.2 L649.9 449.1 L651.0 442.7 L652.1 436.6 L653.3 430.2 L654.5 423.9 L655.9 417.6 L657.4 411.4 L659.0 405.1 L660.7 398.9 L662.6 392.5 L664.5 386.4 L666.6 380.1 L668.9 373.8 L671.2 367.8 L673.7 361.6 L676.4 355.5 L679.1 349.7 L682.0 343.6 L684.9 337.9 L687.9 332.1 L691.1 326.2 L694.4 320.6 L697.7 315.0 L701.1 309.5 L704.8 303.9 L708.4 298.5 L712.2 293.1 L716.0 287.9 L720.1 282.4 L724.1 277.3 L728.2 272.3 L732.4 267.3 L736.9 262.2 L741.3 257.4 L745.9 252.4 L750.5 247.8 L755.3 243.1 L760.2 238.4 L765.2 234.0 L770.5 229.5 L775.8 225.2 L781.3 221.1 L787.0 217.1 L793.0 213.1 L798.9 209.5 L805.1 206.0 L811.4 202.8 L817.7 199.9 L824.2 197.1 L830.7 194.5 L837.0 192.3 L843.6 190.1 L850.0 188.2 L856.5 186.4 L863.0 184.7 L869.3 183.3 L875.7 181.9 L882.1 180.7 L888.5 179.5 L894.7 178.5 L901.1 177.5 L907.3 176.7 L913.5 175.8 L919.7 175.1 L925.7 174.4 L931.9 173.7 L938.1 173.1 L944.1 172.5 L950.2 172.0 L956.4 171.5 L962.5 171.0 L968.5 170.6 L974.7 170.2 L980.9 169.8 L986.8 169.5 L993.0 169.2 L998.9 169.0 L1005.0 168.7 L1011.2 168.5 L1017.1 168.3 L1023.3 168.2 L1029.2 168.1 L1035.2 167.9 L1041.3 167.8 L1047.3 167.8 L1053.4 167.7 L1059.4 167.7 L1065.3 167.7 L1071.3 167.6 L1077.2 167.6 L1083.2 167.7 L1089.1 167.7 L1095.1 167.7 L1101.1 167.8 L1107.1 167.8 L1113.1 167.9 L1126.2 167.9" stroke="#000" stroke-opacity=".6" stroke-width="8"/>
<path d="M709.3 598.0 L709.5 585.0 L709.6 579.0 L709.7 573.1 L709.9 567.3 L710.0 561.5 L710.1 555.5 L710.3 549.8 L710.5 544.0 L710.7 538.3 L710.9 532.6 L711.2 526.8 L711.5 521.0 L711.8 515.4 L712.2 509.8 L712.6 504.1 L713.1 498.5 L713.6 492.9 L714.1 487.4 L714.7 481.8 L715.4 476.3 L716.1 470.8 L716.9 465.3 L717.7 459.8 L718.6 454.3 L719.6 449.0 L720.6 443.6 L721.7 438.4 L722.9 433.0 L724.1 427.8 L725.4 422.6 L726.8 417.5 L728.3 412.4 L729.9 407.3 L731.4 402.4 L733.2 397.4 L735.0 392.3 L736.8 387.6 L738.9 382.6 L740.9 377.9 L743.1 373.0 L745.3 368.3 L747.7 363.5 L750.1 358.9 L752.7 354.2 L755.3 349.7 L758.1 345.1 L760.9 340.7 L763.9 336.2 L766.8 332.0 L769.9 327.7 L773.1 323.5 L776.3 319.4 L779.7 315.3 L783.1 311.5 L786.7 307.5 L790.2 303.8 L794.0 300.1 L797.7 296.6 L801.4 293.2 L805.5 289.7 L809.3 286.6 L813.2 283.5 L817.3 280.6 L821.3 277.8 L825.4 275.2 L829.6 272.6 L833.7 270.3 L837.8 268.0 L842.1 265.9 L846.5 263.8 L850.9 261.9 L855.6 260.1 L860.1 258.4 L864.9 256.7 L869.8 255.2 L874.7 253.8 L879.8 252.4 L884.8 251.1 L890.0 250.0 L895.3 248.9 L900.6 247.8 L905.9 246.9 L911.3 246.1 L916.8 245.2 L922.2 244.5 L927.8 243.8 L933.4 243.2 L939.0 242.5 L944.8 242.0 L950.4 241.4 L956.2 240.9 L961.8 240.5 L967.6 240.0 L973.1 239.6 L978.9 239.2 L984.7 238.9 L990.4 238.6 L996.2 238.3 L1001.9 238.0 L1007.7 237.8 L1013.4 237.6 L1019.2 237.4 L1024.9 237.2 L1030.7 237.1 L1036.6 237.0 L1042.4 236.8 L1048.1 236.8 L1054.1 236.7 L1059.9 236.6 L1065.6 236.6 L1071.6 236.5 L1077.4 236.5 L1083.2 236.5 L1089.2 236.5 L1094.9 236.5 L1100.9 236.5 L1106.8 236.5 L1112.6 236.5 L1126.2 236.6" stroke="#000" stroke-opacity=".6" stroke-width="8"/>
<path d="M708.8 299.0 L713.3 294.1 L710.7 300.3 L716.0 296.0 L714.2 302.7 L720.1 298.9 L718.9 305.9 L725.3 302.6 L724.6 309.8 L731.3 306.9 L731.0 314.1 L737.8 311.5 L737.7 318.7 L744.3 316.2 L744.3 323.1 L750.6 320.6 L750.4 327.3 L756.3 324.6 L755.6 330.9 L760.9 328.0 L759.7 333.7 L764.3 330.4 L762.5 335.5 L766.3 331.8M712.5 293.6 L716.9 289.2 L714.5 295.0 L719.5 291.2 L717.9 297.4 L723.6 294.1 L722.6 300.7 L728.7 297.9 L728.2 304.7 L734.6 302.3 L734.5 309.2 L741.0 307.0 L741.1 313.8 L747.5 311.8 L747.5 318.4 L753.7 316.3 L753.5 322.7 L759.3 320.4 L758.7 326.4 L763.9 323.8 L762.8 329.3 L767.3 326.3 L765.5 331.2 L769.2 327.7M716.1 288.7 L720.3 284.6 L718.0 290.1 L723.0 286.6 L721.4 292.6 L726.9 289.6 L726.0 295.9 L732.0 293.5 L731.6 300.0 L737.8 298.0 L737.8 304.6 L744.2 302.8 L744.3 309.4 L750.6 307.7 L750.7 314.1 L756.7 312.4 L756.6 318.4 L762.2 316.6 L761.7 322.2 L766.7 320.1 L765.8 325.2 L770.1 322.6 L768.4 327.1 L772.0 324.1M719.6 284.0 L723.9 280.0 L721.5 285.5 L726.5 282.1 L724.8 288.0 L730.4 285.2 L729.3 291.5 L735.4 289.1 L734.8 295.7 L741.2 293.7 L741.0 300.4 L747.4 298.7 L747.4 305.3 L753.7 303.7 L753.7 310.1 L759.7 308.5 L759.5 314.6 L765.2 312.8 L764.6 318.4 L769.6 316.3 L768.6 321.5 L772.9 318.9 L771.2 323.5 L774.8 320.4M723.2 279.4 L727.3 275.8 L725.0 280.9 L729.8 277.9 L728.3 283.5 L733.7 281.1 L732.8 287.0 L738.6 285.1 L738.2 291.4 L744.3 289.8 L744.2 296.2 L750.5 294.8 L750.6 301.2 L756.7 300.0 L756.8 306.1 L762.7 304.9 L762.6 310.7 L768.0 309.2 L767.5 314.7 L772.5 312.9 L771.4 317.8 L775.7 315.5 L774.0 319.8 L777.6 317.0M726.5 275.2 L730.5 271.8 L728.4 276.7 L733.1 274.0 L731.6 279.4 L736.9 277.2 L736.0 283.0 L741.7 281.3 L741.4 287.4 L747.4 286.1 L747.4 292.3 L753.5 291.3 L753.6 297.4 L759.6 296.5 L759.8 302.5 L765.5 301.5 L765.5 307.1 L770.8 305.9 L770.4 311.2 L775.2 309.6 L774.2 314.3 L778.4 312.3 L776.8 316.4 L780.2 313.9M729.8 271.2 L733.9 267.9 L731.6 272.8 L736.4 270.1 L734.8 275.5 L740.1 273.4 L739.2 279.2 L744.9 277.6 L744.5 283.7 L750.5 282.5 L750.4 288.7 L756.5 287.7 L756.6 293.9 L762.6 293.0 L762.6 299.0 L768.4 298.1 L768.3 303.8 L773.6 302.7 L773.1 307.9 L778.0 306.5 L776.9 311.1 L781.1 309.2 L779.5 313.3 L782.9 310.8M733.1 267.3 L737.4 263.9 L734.9 268.9 L739.9 266.1 L738.1 271.6 L743.6 269.5 L742.4 275.4 L748.3 273.7 L747.6 280.0 L753.8 278.7 L753.5 285.1 L759.7 284.1 L759.6 290.4 L765.7 289.5 L765.6 295.6 L771.5 294.7 L771.1 300.5 L776.6 299.4 L775.9 304.7 L780.9 303.3 L779.7 308.0 L784.0 306.1 L782.2 310.2 L785.8 307.7M736.7 263.2 L740.9 260.0 L738.5 264.8 L743.3 262.3 L741.6 267.6 L747.0 265.7 L745.9 271.5 L751.7 270.1 L751.0 276.2 L757.1 275.2 L756.7 281.4 L762.9 280.6 L762.7 286.8 L768.8 286.2 L768.6 292.2 L774.5 291.5 L774.1 297.2 L779.6 296.2 L778.9 301.4 L783.8 300.1 L782.6 304.8 L786.9 303.0 L785.0 307.0 L788.6 304.6M740.2 259.4 L744.4 256.3 L741.9 261.0 L746.8 258.6 L745.0 263.9 L750.4 262.1 L749.2 267.8 L755.0 266.5 L754.3 272.6 L760.4 271.7 L760.0 277.9 L766.2 277.2 L765.9 283.4 L772.0 282.8 L771.7 288.9 L777.6 288.2 L777.1 293.9 L782.6 293.1 L781.8 298.3 L786.8 297.1 L785.5 301.7 L789.8 300.0 L787.9 304.0 L791.6 301.7M743.7 255.6 L748.1 252.4 L745.4 257.3 L750.5 254.7 L748.5 260.2 L754.0 258.3 L752.6 264.2 L758.6 262.9 L757.6 269.0 L763.8 268.1 L763.2 274.4 L769.5 273.8 L769.1 280.0 L775.2 279.6 L774.9 285.6 L780.7 285.1 L780.2 290.7 L785.6 290.1 L784.8 295.2 L789.7 294.2 L788.5 298.7 L792.7 297.2 L790.9 301.0 L794.4 298.9M747.4 251.7 L751.7 248.7 L749.1 253.4 L754.1 251.1 L752.1 256.4 L757.6 254.7 L756.2 260.5 L762.0 259.4 L761.1 265.4 L767.2 264.7 L766.6 270.9 L772.8 270.5 L772.4 276.7 L778.5 276.4 L778.0 282.4 L783.9 282.0 L783.3 287.7 L788.8 287.1 L787.8 292.2 L792.8 291.2 L791.4 295.8 L795.8 294.3 L793.7 298.2 L797.5 296.0M751.0 248.0 L755.6 244.9 L752.7 249.7 L757.9 247.4 L755.7 252.8 L761.3 251.1 L759.7 257.0 L765.7 255.8 L764.6 262.0 L770.8 261.3 L770.0 267.6 L776.3 267.2 L775.7 273.5 L781.9 273.2 L781.3 279.3 L787.3 278.9 L786.5 284.6 L792.0 284.1 L790.9 289.3 L796.0 288.3 L794.4 292.9 L798.9 291.4 L796.8 295.3 L800.6 293.2M754.9 244.2 L759.5 241.2 L756.6 246.0 L761.7 243.7 L759.5 249.1 L765.1 247.5 L763.4 253.3 L769.4 252.4 L768.2 258.5 L774.4 258.0 L773.5 264.2 L779.8 264.0 L779.1 270.2 L785.3 270.1 L784.6 276.1 L790.5 276.0 L789.7 281.6 L795.2 281.3 L794.1 286.3 L799.1 285.6 L797.6 290.0 L801.9 288.8 L799.9 292.5 L803.5 290.6M758.8 240.5 L763.3 237.8 L760.5 242.3 L765.5 240.3 L763.3 245.5 L768.8 244.2 L767.2 249.8 L773.1 249.1 L771.8 255.1 L778.0 254.8 L777.1 261.0 L783.3 260.9 L782.5 267.1 L788.7 267.1 L787.9 273.1 L793.9 273.1 L792.9 278.7 L798.5 278.4 L797.2 283.6 L802.3 282.9 L800.6 287.4 L805.1 286.1 L802.9 289.9 L806.7 287.9M762.6 237.0 L767.3 234.2 L764.2 238.9 L769.5 236.8 L767.0 242.1 L772.7 240.8 L770.8 246.5 L776.9 245.8 L775.5 251.9 L781.7 251.6 L780.6 257.8 L786.9 257.9 L786.0 264.0 L792.2 264.2 L791.3 270.2 L797.2 270.3 L796.3 275.9 L801.8 275.8 L800.5 280.8 L805.5 280.3 L803.9 284.6 L808.2 283.6 L806.1 287.2 L809.8 285.5M766.7 233.5 L771.6 230.6 L768.2 235.3 L773.7 233.3 L771.0 238.6 L776.9 237.3 L774.7 243.2 L780.9 242.4 L779.2 248.6 L785.6 248.4 L784.3 254.7 L790.7 254.8 L789.6 261.1 L795.8 261.3 L794.8 267.3 L800.7 267.6 L799.6 273.1 L805.1 273.1 L803.7 278.2 L808.7 277.8 L807.0 282.1 L811.4 281.1 L809.2 284.7 L812.9 283.1M771.0 229.8 L775.7 227.2 L772.5 231.8 L777.8 230.0 L775.2 235.1 L780.9 234.1 L778.8 239.8 L784.8 239.3 L783.2 245.3 L789.4 245.4 L788.1 251.6 L794.4 251.9 L793.2 258.1 L799.4 258.6 L798.3 264.5 L804.2 264.9 L803.0 270.5 L808.5 270.6 L807.0 275.6 L812.0 275.3 L810.2 279.6 L814.6 278.8 L812.3 282.3 L816.1 280.7M775.1 226.4 L780.0 224.0 L776.6 228.4 L782.0 226.8 L779.2 231.9 L785.0 231.0 L782.8 236.6 L788.9 236.3 L787.1 242.3 L793.3 242.5 L791.9 248.6 L798.1 249.1 L796.9 255.3 L803.0 255.9 L801.8 261.8 L807.7 262.4 L806.4 267.9 L811.9 268.2 L810.3 273.1 L815.3 273.0 L813.4 277.2 L817.9 276.5 L815.5 279.9 L819.3 278.5M779.4 223.2 L784.5 220.7 L780.8 225.2 L786.4 223.5 L783.4 228.7 L789.3 227.8 L786.8 233.5 L793.1 233.3 L791.0 239.3 L797.4 239.6 L795.7 245.8 L802.1 246.4 L800.6 252.5 L806.8 253.3 L805.4 259.2 L811.3 259.9 L809.9 265.4 L815.4 265.8 L813.7 270.7 L818.7 270.7 L816.7 274.9 L821.2 274.2 L818.7 277.7 L822.6 276.3M783.9 219.9 L789.1 217.5 L785.3 221.9 L791.0 220.4 L787.8 225.5 L793.8 224.7 L791.1 230.4 L797.4 230.3 L795.2 236.3 L801.6 236.7 L799.7 242.9 L806.1 243.6 L804.4 249.8 L810.7 250.7 L809.1 256.6 L815.1 257.4 L813.4 262.9 L819.0 263.4 L817.1 268.4 L822.2 268.4 L820.1 272.6 L824.6 272.1 L822.0 275.5 L825.9 274.2" stroke="#1a0800" stroke-opacity=".8" stroke-width=".7" stroke-linejoin="bevel"/>
<path d="M708.8 299.0 L719.6 284.0 L729.8 271.2 L740.2 259.4 L751.0 248.0 L762.6 237.0 L775.1 226.4 L788.6 216.7M709.6 299.5 L720.3 284.6 L730.5 271.8 L740.9 260.0 L751.7 248.7 L763.3 237.8 L775.7 227.2 L789.1 217.5M710.7 300.3 L721.5 285.5 L731.6 272.8 L741.9 261.0 L752.7 249.7 L764.2 238.9 L776.6 228.4 L790.0 218.8M712.3 301.4 L723.0 286.6 L733.1 274.0 L743.3 262.3 L754.1 251.1 L765.5 240.3 L777.8 230.0 L791.0 220.4M714.2 302.7 L724.8 288.0 L734.8 275.5 L745.0 263.9 L755.7 252.8 L767.0 242.1 L779.2 231.9 L792.3 222.4M716.4 304.2 L726.9 289.6 L736.9 277.2 L747.0 265.7 L757.6 254.7 L768.8 244.2 L780.9 234.1 L793.8 224.7M718.9 305.9 L729.3 291.5 L739.2 279.2 L749.2 267.8 L759.7 257.0 L770.8 246.5 L782.8 236.6 L795.6 227.4M721.7 307.8 L732.0 293.5 L741.7 281.3 L751.7 270.1 L762.0 259.4 L773.1 249.1 L784.8 239.3 L797.4 230.3M724.6 309.8 L734.8 295.7 L744.5 283.7 L754.3 272.6 L764.6 262.0 L775.5 251.9 L787.1 242.3 L799.5 233.4M727.8 311.9 L737.8 298.0 L747.4 286.1 L757.1 275.2 L767.2 264.7 L778.0 254.8 L789.4 245.4 L801.6 236.7M731.0 314.1 L741.0 300.4 L750.4 288.7 L760.0 277.9 L770.0 267.6 L780.6 257.8 L791.9 248.6 L803.8 240.1M734.3 316.4 L744.2 302.8 L753.5 291.3 L762.9 280.6 L772.8 270.5 L783.3 260.9 L794.4 251.9 L806.1 243.6M737.7 318.7 L747.4 305.3 L756.6 293.9 L765.9 283.4 L775.7 273.5 L786.0 264.0 L796.9 255.3 L808.4 247.2M741.0 320.9 L750.6 307.7 L759.6 296.5 L768.8 286.2 L778.5 276.4 L788.7 267.1 L799.4 258.6 L810.7 250.7M744.3 323.1 L753.7 310.1 L762.6 299.0 L771.7 288.9 L781.3 279.3 L791.3 270.2 L801.8 261.8 L812.9 254.1M747.4 325.3 L756.7 312.4 L765.5 301.5 L774.5 291.5 L783.9 282.0 L793.9 273.1 L804.2 264.9 L815.1 257.4M750.4 327.3 L759.5 314.6 L768.3 303.8 L777.1 293.9 L786.5 284.6 L796.3 275.9 L806.4 267.9 L817.1 260.5M753.1 329.2 L762.2 316.6 L770.8 305.9 L779.6 296.2 L788.8 287.1 L798.5 278.4 L808.5 270.6 L819.0 263.4M755.6 330.9 L764.6 318.4 L773.1 307.9 L781.8 298.3 L790.9 289.3 L800.5 280.8 L810.3 273.1 L820.7 266.1M757.8 332.4 L766.7 320.1 L775.2 309.6 L783.8 300.1 L792.8 291.2 L802.3 282.9 L812.0 275.3 L822.2 268.4M759.7 333.7 L768.6 321.5 L776.9 311.1 L785.5 301.7 L794.4 292.9 L803.9 284.6 L813.4 277.2 L823.5 270.4M761.3 334.7 L770.1 322.6 L778.4 312.3 L786.9 303.0 L795.8 294.3 L805.1 286.1 L814.6 278.8 L824.6 272.1M762.5 335.5 L771.2 323.5 L779.5 313.3 L787.9 304.0 L796.8 295.3 L806.1 287.2 L815.5 279.9 L825.4 273.3M763.3 336.1 L772.0 324.1 L780.2 313.9 L788.6 304.6 L797.5 296.0 L806.7 287.9 L816.1 280.7 L825.9 274.2" stroke="#100400" stroke-width="1"/>
<path d="M641.4 552.8 L640.6 598.0 L641.9 552.9 L641.3 598.0 L642.9 552.9 L642.5 598.0 L644.4 552.9 L644.3 598.0 L646.3 553.0 L646.4 598.0 L648.7 553.0 L649.0 598.0 L651.4 553.1 L651.9 598.0 L654.5 553.2 L655.2 598.0 L658.0 553.3 L658.8 598.0 L661.6 553.4 L662.6 598.0 L665.5 553.5 L666.5 598.0 L669.6 553.6 L670.6 598.0 L673.7 553.8 L674.8 598.0 L677.8 553.9 L679.0 598.0 L682.0 554.0 L683.1 598.0 L686.0 554.1 L687.0 598.0 L689.9 554.2 L690.8 598.0 L693.6 554.3 L694.4 598.0 L697.0 554.4 L697.7 598.0 L700.1 554.5 L700.6 598.0 L702.8 554.6 L703.2 598.0 L705.2 554.7 L705.3 598.0 L707.1 554.7 L707.1 598.0 L708.6 554.8 L708.3 598.0 L709.6 554.8 L709.0 598.0 L710.1 554.8M643.0 517.5 L641.6 552.8 L643.5 517.5 L642.4 552.9 L644.5 517.5 L643.6 552.9 L646.0 517.6 L645.3 553.0 L647.9 517.7 L647.5 553.0 L650.2 517.9 L650.0 553.1 L653.0 518.0 L652.9 553.2 L656.1 518.2 L656.2 553.3 L659.5 518.4 L659.8 553.4 L663.2 518.6 L663.6 553.5 L667.0 518.8 L667.5 553.6 L671.0 519.0 L671.6 553.7 L675.1 519.2 L675.8 553.8 L679.3 519.4 L679.9 553.9 L683.4 519.7 L684.0 554.1 L687.4 519.9 L688.0 554.2 L691.3 520.1 L691.7 554.3 L694.9 520.3 L695.3 554.4 L698.3 520.5 L698.6 554.5 L701.4 520.7 L701.5 554.6 L704.2 520.8 L704.1 554.6 L706.5 520.9 L706.2 554.7 L708.5 521.0 L707.9 554.7 L709.9 521.1 L709.2 554.8 L710.9 521.2 L709.9 554.8 L711.4 521.2M644.2 499.8 L643.2 517.5 L644.7 499.9 L643.9 517.5 L645.7 499.9 L645.2 517.6 L647.2 500.1 L646.9 517.7 L649.1 500.2 L649.0 517.8 L651.4 500.4 L651.6 517.9 L654.2 500.6 L654.5 518.1 L657.3 500.8 L657.8 518.3 L660.7 501.1 L661.3 518.5 L664.3 501.3 L665.1 518.7 L668.2 501.6 L669.0 518.9 L672.2 501.9 L673.1 519.1 L676.3 502.2 L677.2 519.3 L680.4 502.6 L681.3 519.6 L684.5 502.9 L685.4 519.8 L688.5 503.2 L689.4 520.0 L692.4 503.5 L693.1 520.2 L696.0 503.7 L696.7 520.4 L699.4 504.0 L699.9 520.6 L702.5 504.2 L702.9 520.7 L705.3 504.4 L705.4 520.9 L707.6 504.6 L707.6 521.0 L709.5 504.7 L709.3 521.1 L711.0 504.9 L710.5 521.2 L712.0 504.9 L711.2 521.2 L712.5 505.0M645.7 482.7 L644.4 499.8 L646.2 482.7 L645.1 499.9 L647.2 482.8 L646.4 500.0 L648.7 483.0 L648.1 500.1 L650.6 483.2 L650.2 500.3 L652.9 483.4 L652.8 500.5 L655.7 483.7 L655.7 500.7 L658.7 484.0 L658.9 500.9 L662.1 484.3 L662.5 501.2 L665.8 484.7 L666.2 501.5 L669.6 485.1 L670.2 501.8 L673.6 485.5 L674.2 502.1 L677.7 485.9 L678.3 502.4 L681.8 486.3 L682.5 502.7 L685.9 486.7 L686.5 503.0 L689.9 487.1 L690.5 503.3 L693.8 487.5 L694.2 503.6 L697.4 487.9 L697.8 503.9 L700.8 488.2 L701.0 504.1 L703.9 488.5 L703.9 504.3 L706.6 488.8 L706.5 504.5 L709.0 489.0 L708.6 504.7 L710.9 489.2 L710.3 504.8 L712.3 489.4 L711.5 504.9 L713.3 489.5 L712.3 505.0 L713.8 489.5M647.6 466.1 L645.9 482.7 L648.1 466.1 L646.7 482.8 L649.1 466.3 L647.9 482.9 L650.5 466.5 L649.6 483.1 L652.4 466.7 L651.7 483.3 L654.8 467.0 L654.3 483.5 L657.5 467.4 L657.2 483.8 L660.6 467.7 L660.4 484.2 L664.0 468.2 L663.9 484.5 L667.6 468.6 L667.7 484.9 L671.4 469.1 L671.6 485.3 L675.4 469.7 L675.7 485.7 L679.5 470.2 L679.8 486.1 L683.6 470.7 L683.9 486.5 L687.7 471.2 L687.9 486.9 L691.7 471.7 L691.9 487.3 L695.5 472.2 L695.6 487.7 L699.1 472.7 L699.2 488.0 L702.5 473.1 L702.4 488.4 L705.6 473.5 L705.3 488.7 L708.3 473.9 L707.9 488.9 L710.7 474.2 L710.0 489.1 L712.6 474.4 L711.7 489.3 L714.0 474.6 L712.9 489.4 L715.0 474.7 L713.6 489.5 L715.5 474.8M649.8 450.7 L647.8 466.1 L650.2 450.8 L648.5 466.2 L651.2 450.9 L649.8 466.4 L652.7 451.1 L651.4 466.6 L654.6 451.4 L653.6 466.8 L656.9 451.8 L656.1 467.2 L659.6 452.2 L659.0 467.5 L662.7 452.7 L662.2 468.0 L666.1 453.2 L665.7 468.4 L669.7 453.8 L669.5 468.9 L673.5 454.4 L673.4 469.4 L677.5 455.0 L677.5 469.9 L681.5 455.6 L681.5 470.4 L685.6 456.2 L685.6 471.0 L689.7 456.9 L689.7 471.5 L693.7 457.5 L693.6 472.0 L697.5 458.1 L697.4 472.5 L701.1 458.6 L700.9 472.9 L704.5 459.1 L704.1 473.3 L707.6 459.6 L707.0 473.7 L710.3 460.0 L709.5 474.0 L712.6 460.4 L711.7 474.3 L714.5 460.7 L713.3 474.5 L716.0 460.9 L714.6 474.7 L716.9 461.1 L715.3 474.8 L717.4 461.1M652.2 436.1 L649.9 450.7 L652.7 436.2 L650.7 450.8 L653.7 436.4 L651.9 451.0 L655.1 436.7 L653.6 451.3 L657.0 437.0 L655.7 451.6 L659.3 437.5 L658.2 452.0 L662.0 438.0 L661.1 452.4 L665.1 438.5 L664.3 452.9 L668.4 439.2 L667.8 453.5 L672.0 439.8 L671.6 454.1 L675.8 440.5 L675.5 454.7 L679.8 441.3 L679.5 455.3 L683.8 442.0 L683.6 455.9 L687.9 442.8 L687.7 456.5 L692.0 443.5 L691.7 457.2 L695.9 444.3 L695.6 457.8 L699.7 445.0 L699.3 458.3 L703.3 445.6 L702.8 458.9 L706.7 446.2 L706.1 459.4 L709.7 446.8 L709.0 459.8 L712.4 447.3 L711.5 460.2 L714.8 447.7 L713.6 460.5 L716.7 448.1 L715.3 460.8 L718.1 448.4 L716.5 461.0 L719.1 448.5 L717.2 461.1 L719.6 448.6M655.0 422.3 L652.4 436.2 L655.4 422.4 L653.1 436.3 L656.4 422.6 L654.3 436.5 L657.8 422.9 L656.0 436.9 L659.7 423.3 L658.1 437.2 L662.0 423.8 L660.6 437.7 L664.7 424.4 L663.5 438.2 L667.7 425.1 L666.7 438.8 L671.1 425.8 L670.2 439.5 L674.7 426.6 L673.9 440.2 L678.5 427.4 L677.8 440.9 L682.4 428.3 L681.8 441.6 L686.4 429.2 L685.9 442.4 L690.5 430.1 L689.9 443.1 L694.5 430.9 L694.0 443.9 L698.4 431.8 L697.8 444.6 L702.2 432.6 L701.6 445.3 L705.8 433.4 L705.0 445.9 L709.1 434.1 L708.3 446.5 L712.2 434.8 L711.1 447.1 L714.8 435.4 L713.7 447.5 L717.2 435.9 L715.8 447.9 L719.0 436.3 L717.4 448.2 L720.5 436.6 L718.6 448.5 L721.4 436.8 L719.4 448.6 L721.9 436.9M658.0 409.4 L655.1 422.3 L658.4 409.5 L655.9 422.5 L659.4 409.7 L657.1 422.8 L660.8 410.1 L658.7 423.1 L662.7 410.6 L660.8 423.6 L665.0 411.1 L663.3 424.1 L667.7 411.8 L666.2 424.8 L670.7 412.6 L669.4 425.5 L674.0 413.4 L672.8 426.2 L677.6 414.3 L676.5 427.0 L681.3 415.2 L680.4 427.9 L685.2 416.2 L684.4 428.7 L689.2 417.2 L688.4 429.6 L693.2 418.2 L692.5 430.5 L697.2 419.2 L696.5 431.4 L701.1 420.2 L700.3 432.2 L704.9 421.1 L704.0 433.0 L708.5 422.0 L707.5 433.8 L711.8 422.8 L710.7 434.5 L714.8 423.6 L713.6 435.1 L717.5 424.3 L716.0 435.7 L719.7 424.8 L718.1 436.1 L721.6 425.3 L719.8 436.5 L723.0 425.7 L721.0 436.7 L724.0 425.9 L721.7 436.9 L724.5 426.0M661.2 397.2 L658.1 409.4 L661.7 397.4 L658.9 409.6 L662.7 397.6 L660.1 409.9 L664.1 398.0 L661.7 410.3 L665.9 398.6 L663.8 410.8 L668.2 399.2 L666.3 411.5 L670.8 400.0 L669.1 412.2 L673.8 400.8 L672.3 413.0 L677.1 401.8 L675.7 413.8 L680.6 402.8 L679.4 414.7 L684.4 403.8 L683.3 415.7 L688.2 404.9 L687.2 416.7 L692.2 406.0 L691.2 417.7 L696.2 407.2 L695.2 418.7 L700.2 408.3 L699.2 419.7 L704.0 409.4 L703.0 420.7 L707.8 410.5 L706.7 421.6 L711.3 411.5 L710.2 422.4 L714.6 412.4 L713.3 423.2 L717.6 413.2 L716.2 423.9 L720.2 414.0 L718.6 424.6 L722.5 414.6 L720.7 425.1 L724.3 415.2 L722.4 425.5 L725.7 415.6 L723.6 425.8 L726.7 415.8 L724.3 426.0 L727.2 416.0M664.9 385.5 L661.4 397.3 L665.3 385.6 L662.1 397.5 L666.3 385.9 L663.3 397.8 L667.7 386.4 L665.0 398.3 L669.5 387.0 L667.0 398.9 L671.8 387.7 L669.5 399.6 L674.4 388.5 L672.3 400.4 L677.3 389.5 L675.4 401.3 L680.6 390.5 L678.9 402.2 L684.1 391.6 L682.5 403.3 L687.7 392.8 L686.3 404.4 L691.6 394.1 L690.2 405.5 L695.5 395.3 L694.2 406.6 L699.4 396.6 L698.2 407.7 L703.3 397.9 L702.1 408.9 L707.2 399.1 L705.9 409.9 L710.8 400.3 L709.6 411.0 L714.3 401.4 L713.0 411.9 L717.6 402.5 L716.1 412.8 L720.5 403.4 L718.9 413.6 L723.1 404.3 L721.4 414.3 L725.4 405.0 L723.5 414.9 L727.2 405.6 L725.1 415.4 L728.6 406.0 L726.3 415.7 L729.6 406.3 L727.0 415.9 L730.0 406.5M668.9 374.0 L665.0 385.5 L669.3 374.2 L665.8 385.7 L670.3 374.5 L666.9 386.1 L671.7 375.0 L668.5 386.6 L673.5 375.7 L670.6 387.3 L675.7 376.5 L673.0 388.1 L678.2 377.4 L675.8 389.0 L681.1 378.5 L678.9 390.0 L684.3 379.7 L682.3 391.1 L687.8 380.9 L685.9 392.2 L691.4 382.3 L689.6 393.4 L695.2 383.6 L693.5 394.7 L699.0 385.1 L697.4 396.0 L702.9 386.5 L701.4 397.2 L706.8 387.9 L705.3 398.5 L710.5 389.3 L709.0 399.7 L714.2 390.6 L712.6 400.9 L717.6 391.9 L716.0 402.0 L720.8 393.0 L719.1 403.0 L723.7 394.1 L721.9 403.9 L726.3 395.0 L724.3 404.6 L728.5 395.8 L726.4 405.3 L730.3 396.5 L728.0 405.8 L731.6 397.0 L729.1 406.2 L732.6 397.3 L729.9 406.4 L733.0 397.5M673.1 363.4 L669.1 374.1 L673.5 363.6 L669.8 374.3 L674.4 363.9 L670.9 374.8 L675.8 364.5 L672.5 375.3 L677.6 365.2 L674.5 376.1 L679.8 366.1 L676.9 377.0 L682.3 367.1 L679.7 378.0 L685.1 368.2 L682.7 379.1 L688.3 369.5 L686.0 380.3 L691.7 370.9 L689.6 381.6 L695.3 372.3 L693.3 382.9 L699.0 373.8 L697.1 384.3 L702.8 375.3 L701.0 385.8 L706.6 376.9 L704.8 387.2 L710.4 378.4 L708.7 388.6 L714.1 379.9 L712.4 389.9 L717.7 381.3 L715.9 391.2 L721.0 382.7 L719.2 392.5 L724.2 384.0 L722.3 393.6 L727.1 385.1 L725.0 394.6 L729.6 386.2 L727.4 395.5 L731.8 387.0 L729.4 396.2 L733.5 387.7 L731.0 396.8 L734.9 388.3 L732.2 397.2 L735.8 388.7 L732.9 397.4 L736.3 388.8M677.5 353.3 L673.2 363.4 L677.9 353.5 L673.9 363.7 L678.8 353.9 L675.1 364.2 L680.1 354.5 L676.6 364.8 L681.9 355.2 L678.6 365.6 L684.0 356.2 L681.0 366.6 L686.5 357.3 L683.7 367.7 L689.3 358.5 L686.7 368.9 L692.4 359.9 L690.0 370.2 L695.7 361.4 L693.4 371.6 L699.3 362.9 L697.1 373.1 L702.9 364.6 L700.9 374.6 L706.6 366.2 L704.7 376.1 L710.4 367.9 L708.5 377.6 L714.1 369.5 L712.2 379.2 L717.8 371.1 L715.9 380.6 L721.3 372.7 L719.4 382.0 L724.6 374.2 L722.7 383.4 L727.7 375.5 L725.7 384.6 L730.5 376.8 L728.4 385.7 L733.0 377.9 L730.7 386.6 L735.1 378.8 L732.7 387.4 L736.9 379.6 L734.3 388.0 L738.2 380.2 L735.4 388.5 L739.1 380.6 L736.1 388.8 L739.5 380.8M682.0 343.7 L677.6 353.4 L682.5 343.9 L678.3 353.7 L683.3 344.3 L679.4 354.1 L684.6 345.0 L681.0 354.8 L686.4 345.8 L682.9 355.7 L688.5 346.8 L685.2 356.7 L690.9 348.0 L687.9 357.9 L693.7 349.3 L690.8 359.2 L696.7 350.7 L694.1 360.6 L700.0 352.3 L697.5 362.2 L703.4 354.0 L701.1 363.7 L707.0 355.7 L704.8 365.4 L710.7 357.5 L708.5 367.0 L714.4 359.2 L712.3 368.7 L718.0 361.0 L715.9 370.3 L721.6 362.7 L719.5 371.9 L725.1 364.4 L723.0 373.5 L728.3 365.9 L726.2 374.9 L731.4 367.4 L729.1 376.2 L734.1 368.7 L731.8 377.4 L736.6 369.9 L734.1 378.4 L738.7 370.9 L736.0 379.3 L740.4 371.7 L737.6 379.9 L741.7 372.4 L738.7 380.4 L742.6 372.8 L739.4 380.7 L743.0 373.0M686.5 334.8 L682.2 343.8 L687.0 335.0 L682.8 344.1 L687.8 335.5 L683.9 344.6 L689.1 336.1 L685.5 345.3 L690.8 337.0 L687.4 346.3 L692.9 338.1 L689.6 347.4 L695.3 339.3 L692.2 348.6 L698.0 340.7 L695.2 350.0 L701.0 342.2 L698.3 351.5 L704.2 343.9 L701.7 353.1 L707.6 345.6 L705.2 354.8 L711.1 347.5 L708.8 356.6 L714.7 349.3 L712.5 358.3 L718.4 351.2 L716.2 360.1 L722.0 353.0 L719.8 361.9 L725.5 354.8 L723.4 363.5 L728.9 356.6 L726.7 365.2 L732.1 358.2 L729.9 366.7 L735.1 359.8 L732.8 368.1 L737.8 361.2 L735.4 369.3 L740.2 362.4 L737.7 370.4 L742.3 363.5 L739.6 371.3 L744.0 364.3 L741.1 372.1 L745.3 365.0 L742.2 372.6 L746.1 365.4 L742.9 372.9 L746.6 365.7M691.2 326.3 L686.7 334.9 L691.6 326.5 L687.3 335.2 L692.5 327.0 L688.4 335.8 L693.7 327.7 L689.9 336.6 L695.4 328.6 L691.8 337.5 L697.4 329.7 L694.0 338.7 L699.8 331.0 L696.6 340.0 L702.4 332.5 L699.5 341.5 L705.4 334.1 L702.6 343.1 L708.5 335.9 L705.9 344.8 L711.9 337.7 L709.3 346.5 L715.3 339.6 L712.9 348.4 L718.8 341.6 L716.5 350.2 L722.4 343.6 L720.2 352.1 L725.9 345.5 L723.7 353.9 L729.4 347.5 L727.2 355.7 L732.7 349.3 L730.5 357.4 L735.9 351.0 L733.6 359.0 L738.8 352.7 L736.5 360.5 L741.5 354.1 L739.1 361.8 L743.9 355.5 L741.3 363.0 L745.9 356.6 L743.2 363.9 L747.5 357.5 L744.7 364.7 L748.8 358.2 L745.7 365.3 L749.6 358.7 L746.4 365.6 L750.1 358.9M695.6 318.6 L691.3 326.4 L696.1 318.8 L692.0 326.7 L696.9 319.3 L693.0 327.3 L698.1 320.0 L694.5 328.1 L699.8 321.0 L696.3 329.1 L701.8 322.2 L698.5 330.4 L704.1 323.5 L701.1 331.8 L706.7 325.1 L703.9 333.3 L709.6 326.7 L706.9 335.0 L712.7 328.6 L710.2 336.8 L716.0 330.5 L713.6 338.7 L719.4 332.5 L717.1 340.6 L722.9 334.5 L720.6 342.6 L726.4 336.6 L724.2 344.6 L729.9 338.6 L727.7 346.5 L733.3 340.6 L731.1 348.4 L736.5 342.5 L734.3 350.2 L739.6 344.4 L737.4 351.9 L742.5 346.0 L740.2 353.4 L745.2 347.6 L742.7 354.8 L747.5 348.9 L744.9 356.0 L749.5 350.1 L746.8 357.1 L751.1 351.1 L748.2 357.9 L752.3 351.8 L749.3 358.5 L753.2 352.3 L749.9 358.8 L753.6 352.5M700.0 311.4 L695.8 318.7 L700.4 311.7 L696.4 319.0 L701.3 312.2 L697.5 319.6 L702.5 312.9 L698.9 320.5 L704.1 313.9 L700.7 321.5 L706.0 315.1 L702.9 322.8 L708.3 316.5 L705.4 324.3 L710.9 318.1 L708.1 325.9 L713.8 319.9 L711.1 327.6 L716.8 321.8 L714.3 329.5 L720.0 323.8 L717.7 331.5 L723.4 325.9 L721.1 333.5 L726.8 328.0 L724.6 335.6 L730.3 330.1 L728.1 337.6 L733.7 332.2 L731.6 339.6 L737.1 334.3 L734.9 341.6 L740.3 336.3 L738.1 343.5 L743.3 338.2 L741.1 345.2 L746.2 339.9 L743.9 346.8 L748.8 341.5 L746.4 348.3 L751.0 342.9 L748.5 349.6 L753.0 344.2 L750.3 350.6 L754.6 345.1 L751.8 351.5 L755.8 345.9 L752.8 352.1 L756.7 346.4 L753.5 352.4 L757.1 346.7M704.4 304.6 L700.2 311.5 L704.8 304.9 L700.8 311.9 L705.6 305.4 L701.8 312.5 L706.8 306.2 L703.2 313.4 L708.4 307.3 L705.0 314.5 L710.3 308.5 L707.1 315.8 L712.5 310.0 L709.6 317.3 L715.1 311.6 L712.3 319.0 L717.9 313.5 L715.3 320.8 L720.9 315.4 L718.4 322.8 L724.0 317.5 L721.7 324.8 L727.3 319.7 L725.1 326.9 L730.7 321.9 L728.5 329.0 L734.1 324.1 L732.0 331.2 L737.4 326.3 L735.4 333.3 L740.7 328.5 L738.7 335.3 L743.9 330.5 L741.8 337.2 L746.9 332.5 L744.8 339.1 L749.7 334.3 L747.5 340.7 L752.2 336.0 L749.9 342.3 L754.5 337.5 L752.1 343.6 L756.4 338.7 L753.9 344.7 L758.0 339.8 L755.3 345.6 L759.2 340.5 L756.3 346.2 L760.0 341.1 L756.9 346.6 L760.4 341.3M708.3 298.7 L704.5 304.7 L708.8 299.0 L705.1 305.1 L709.6 299.5 L706.1 305.8 L710.7 300.3 L707.5 306.7 L712.3 301.4 L709.3 307.9 L714.2 302.7 L711.4 309.2 L716.4 304.2 L713.8 310.8 L718.9 305.9 L716.4 312.5 L721.7 307.8 L719.3 314.4 L724.6 309.8 L722.4 316.5 L727.8 311.9 L725.7 318.6 L731.0 314.1 L729.0 320.8 L734.3 316.4 L732.4 323.0 L737.7 318.7 L735.8 325.2 L741.0 320.9 L739.1 327.4 L744.3 323.1 L742.3 329.5 L747.4 325.3 L745.4 331.5 L750.4 327.3 L748.3 333.4 L753.1 329.2 L751.0 335.2 L755.6 330.9 L753.4 336.7 L757.8 332.4 L755.5 338.1 L759.7 333.7 L757.2 339.3 L761.3 334.7 L758.6 340.2 L762.5 335.5 L759.6 340.8 L763.3 336.1 L760.3 341.2 L763.7 336.4M815.2 201.1 L788.4 216.4 L815.4 201.6 L788.8 217.0 L815.8 202.5 L789.5 218.1 L816.4 203.8 L790.5 219.5 L817.3 205.6 L791.6 221.4 L818.3 207.8 L793.1 223.5 L819.5 210.4 L794.7 226.0 L820.8 213.2 L796.5 228.8 L822.3 216.4 L798.4 231.8 L823.8 219.8 L800.5 235.0 L825.5 223.4 L802.7 238.4 L827.2 227.1 L805.0 241.9 L829.0 230.9 L807.3 245.4 L830.8 234.8 L809.6 248.9 L832.5 238.6 L811.8 252.4 L834.3 242.3 L814.0 255.8 L835.9 245.9 L816.1 259.0 L837.5 249.3 L818.1 262.0 L839.0 252.5 L819.9 264.8 L840.3 255.3 L821.5 267.3 L841.5 257.9 L822.9 269.5 L842.5 260.1 L824.1 271.3 L843.4 261.9 L825.0 272.7 L844.0 263.2 L825.7 273.8 L844.4 264.1 L826.1 274.4 L844.6 264.6M841.3 190.9 L815.2 201.3 L841.5 191.4 L815.6 202.0 L841.8 192.3 L816.1 203.1 L842.3 193.8 L816.8 204.7 L842.9 195.6 L817.7 206.7 L843.6 197.9 L818.8 209.0 L844.5 200.6 L820.1 211.8 L845.5 203.6 L821.5 214.8 L846.6 206.9 L823.0 218.1 L847.8 210.4 L824.7 221.6 L849.0 214.2 L826.4 225.2 L850.3 218.0 L828.1 229.0 L851.7 222.0 L829.9 232.9 L853.0 226.0 L831.7 236.7 L854.3 230.0 L833.4 240.5 L855.6 233.9 L835.1 244.1 L856.9 237.7 L836.7 247.6 L858.0 241.2 L838.3 250.9 L859.1 244.5 L839.7 254.0 L860.1 247.5 L840.9 256.7 L861.0 250.2 L842.0 259.0 L861.8 252.4 L843.0 261.0 L862.4 254.3 L843.7 262.6 L862.9 255.7 L844.2 263.7 L863.2 256.7 L844.5 264.4 L863.3 257.2M865.6 184.2 L841.4 191.1 L865.7 184.7 L841.6 191.8 L866.0 185.7 L842.0 193.0 L866.3 187.1 L842.5 194.6 L866.8 189.0 L843.2 196.7 L867.3 191.3 L844.1 199.2 L868.0 194.0 L845.0 202.0 L868.7 197.1 L846.0 205.2 L869.5 200.5 L847.2 208.6 L870.4 204.1 L848.4 212.3 L871.3 207.9 L849.7 216.1 L872.3 211.9 L851.0 220.0 L873.2 215.9 L852.3 224.0 L874.2 220.0 L853.7 228.0 L875.2 224.1 L855.0 232.0 L876.1 228.1 L856.2 235.8 L877.1 231.9 L857.5 239.5 L877.9 235.5 L858.6 242.9 L878.7 238.9 L859.6 246.0 L879.5 241.9 L860.6 248.9 L880.1 244.7 L861.4 251.4 L880.7 247.0 L862.1 253.4 L881.1 248.9 L862.6 255.1 L881.5 250.3 L863.0 256.3 L881.7 251.3 L863.3 257.0 L881.8 251.8M888.0 179.7 L865.7 184.4 L888.1 180.2 L865.8 185.1 L888.3 181.2 L866.1 186.3 L888.5 182.6 L866.5 188.0 L888.9 184.5 L867.0 190.1 L889.3 186.9 L867.6 192.6 L889.8 189.6 L868.3 195.5 L890.3 192.7 L869.1 198.8 L890.9 196.1 L869.9 202.3 L891.6 199.8 L870.8 206.0 L892.3 203.6 L871.8 209.9 L893.0 207.6 L872.7 213.9 L893.7 211.7 L873.7 218.0 L894.5 215.8 L874.7 222.1 L895.2 219.9 L875.7 226.1 L895.9 223.9 L876.6 230.0 L896.6 227.8 L877.5 233.7 L897.2 231.4 L878.3 237.2 L897.8 234.8 L879.1 240.4 L898.4 237.9 L879.8 243.3 L898.9 240.7 L880.4 245.9 L899.3 243.0 L880.9 248.0 L899.6 244.9 L881.3 249.7 L899.9 246.4 L881.6 250.9 L900.1 247.4 L881.8 251.6 L900.2 247.9M906.0 176.9 L888.0 179.9 L906.1 177.4 L888.2 180.6 L906.2 178.4 L888.4 181.8 L906.4 179.9 L888.7 183.5 L906.7 181.8 L889.1 185.7 L907.0 184.1 L889.5 188.2 L907.4 186.9 L890.0 191.1 L907.9 190.0 L890.6 194.4 L908.3 193.4 L891.3 197.9 L908.9 197.0 L891.9 201.7 L909.4 200.9 L892.6 205.6 L910.0 204.9 L893.4 209.7 L910.6 209.0 L894.1 213.8 L911.1 213.2 L894.8 217.9 L911.7 217.3 L895.5 221.9 L912.3 221.3 L896.2 225.9 L912.8 225.2 L896.9 229.6 L913.4 228.8 L897.5 233.2 L913.8 232.3 L898.1 236.4 L914.3 235.4 L898.6 239.3 L914.7 238.1 L899.1 241.9 L915.0 240.4 L899.5 244.0 L915.3 242.4 L899.8 245.7 L915.5 243.8 L900.0 246.9 L915.6 244.8 L900.1 247.7 L915.7 245.3M923.3 174.7 L906.0 177.1 L923.4 175.2 L906.2 177.8 L923.5 176.2 L906.3 179.1 L923.6 177.7 L906.6 180.8 L923.9 179.6 L906.9 182.9 L924.1 182.0 L907.2 185.5 L924.4 184.7 L907.6 188.4 L924.8 187.8 L908.1 191.6 L925.2 191.3 L908.6 195.2 L925.6 194.9 L909.1 199.0 L926.0 198.8 L909.7 202.9 L926.5 202.8 L910.3 207.0 L927.0 207.0 L910.9 211.1 L927.4 211.1 L911.4 215.2 L927.9 215.2 L912.0 219.3 L928.4 219.3 L912.6 223.3 L928.8 223.1 L913.1 227.0 L929.2 226.8 L913.6 230.6 L929.6 230.2 L914.1 233.8 L930.0 233.3 L914.5 236.8 L930.3 236.1 L914.8 239.3 L930.6 238.5 L915.1 241.5 L930.8 240.4 L915.4 243.2 L930.9 241.9 L915.6 244.4 L931.0 242.8 L915.7 245.1 L931.1 243.3M943.4 172.7 L923.3 174.9 L943.4 173.2 L923.4 175.7 L943.5 174.2 L923.6 176.9 L943.7 175.6 L923.7 178.6 L943.8 177.6 L924.0 180.7 L944.1 179.9 L924.3 183.3 L944.3 182.7 L924.6 186.2 L944.6 185.8 L925.0 189.5 L944.9 189.2 L925.4 193.1 L945.2 192.9 L925.8 196.8 L945.6 196.8 L926.3 200.8 L946.0 200.8 L926.7 204.9 L946.3 205.0 L927.2 209.0 L946.7 209.1 L927.7 213.2 L947.1 213.3 L928.1 217.3 L947.4 217.3 L928.6 221.2 L947.8 221.2 L929.0 225.0 L948.1 224.9 L929.4 228.6 L948.4 228.3 L929.8 231.8 L948.7 231.4 L930.1 234.8 L949.0 234.2 L930.4 237.3 L949.2 236.5 L930.7 239.5 L949.4 238.5 L930.9 241.2 L949.5 239.9 L931.0 242.4 L949.6 240.9 L931.1 243.2 L949.6 241.4M963.2 171.0 L943.4 172.8 L963.2 171.5 L943.5 173.6 L963.3 172.5 L943.6 174.8 L963.4 174.0 L943.8 176.5 L963.6 175.9 L943.9 178.7 L963.7 178.3 L944.2 181.3 L963.9 181.1 L944.4 184.2 L964.2 184.2 L944.7 187.5 L964.4 187.6 L945.1 191.0 L964.7 191.3 L945.4 194.8 L965.0 195.2 L945.8 198.8 L965.3 199.3 L946.1 202.9 L965.6 203.4 L946.5 207.0 L965.9 207.6 L946.9 211.2 L966.2 211.7 L947.3 215.3 L966.5 215.7 L947.6 219.3 L966.8 219.6 L948.0 223.1 L967.1 223.3 L948.3 226.6 L967.3 226.7 L948.6 229.9 L967.6 229.9 L948.9 232.8 L967.8 232.6 L949.1 235.4 L967.9 235.0 L949.3 237.6 L968.1 236.9 L949.4 239.3 L968.2 238.4 L949.6 240.5 L968.3 239.4 L949.6 241.3 L968.3 239.9M986.5 169.6 L963.2 171.2 L986.6 170.1 L963.3 172.0 L986.6 171.1 L963.4 173.2 L986.7 172.6 L963.5 174.9 L986.8 174.5 L963.6 177.1 L986.9 176.9 L963.8 179.6 L987.1 179.7 L964.0 182.6 L987.2 182.8 L964.3 185.9 L987.4 186.2 L964.6 189.4 L987.6 189.9 L964.8 193.2 L987.8 193.8 L965.1 197.2 L988.1 197.8 L965.4 201.3 L988.3 202.0 L965.7 205.5 L988.5 206.2 L966.1 209.6 L988.7 210.3 L966.4 213.7 L988.9 214.3 L966.7 217.7 L989.1 218.2 L966.9 221.5 L989.3 221.9 L967.2 225.1 L989.5 225.4 L967.4 228.3 L989.7 228.5 L967.7 231.3 L989.8 231.2 L967.9 233.9 L990.0 233.6 L968.0 236.0 L990.1 235.6 L968.1 237.7 L990.1 237.0 L968.2 239.0 L990.2 238.0 L968.3 239.7 L990.2 238.5M1008.9 168.7 L986.6 169.8 L1008.9 169.2 L986.6 170.5 L1008.9 170.2 L986.7 171.8 L1009.0 171.6 L986.8 173.5 L1009.1 173.6 L986.9 175.7 L1009.1 176.0 L987.0 178.2 L1009.2 178.7 L987.2 181.2 L1009.4 181.8 L987.3 184.5 L1009.5 185.3 L987.5 188.0 L1009.6 189.0 L987.7 191.8 L1009.8 192.9 L987.9 195.8 L1009.9 196.9 L988.2 199.9 L1010.1 201.0 L988.4 204.1 L1010.2 205.2 L988.6 208.2 L1010.4 209.4 L988.8 212.3 L1010.5 213.4 L989.0 216.3 L1010.7 217.3 L989.2 220.1 L1010.8 221.0 L989.4 223.7 L1010.9 224.4 L989.6 227.0 L1011.0 227.5 L989.8 229.9 L1011.1 230.3 L989.9 232.5 L1011.2 232.7 L990.0 234.6 L1011.3 234.6 L990.1 236.4 L1011.4 236.1 L990.2 237.6 L1011.4 237.1 L990.2 238.3 L1011.4 237.6M1032.0 168.1 L1008.9 168.9 L1032.0 168.6 L1008.9 169.6 L1032.0 169.6 L1008.9 170.8 L1032.0 171.0 L1009.0 172.6 L1032.1 173.0 L1009.1 174.7 L1032.1 175.3 L1009.2 177.3 L1032.2 178.1 L1009.3 180.2 L1032.3 181.2 L1009.4 183.5 L1032.3 184.7 L1009.5 187.1 L1032.4 188.3 L1009.7 190.9 L1032.5 192.2 L1009.8 194.9 L1032.6 196.3 L1010.0 199.0 L1032.7 200.4 L1010.1 203.1 L1032.8 204.6 L1010.3 207.3 L1032.9 208.7 L1010.4 211.4 L1032.9 212.8 L1010.6 215.4 L1033.0 216.7 L1010.7 219.2 L1033.1 220.4 L1010.9 222.7 L1033.2 223.8 L1011.0 226.0 L1033.2 226.9 L1011.1 229.0 L1033.3 229.7 L1011.2 231.5 L1033.4 232.0 L1011.3 233.7 L1033.4 234.0 L1011.3 235.4 L1033.4 235.5 L1011.4 236.7 L1033.5 236.5 L1011.4 237.4 L1033.5 237.0M1079.6 167.7 L1032.0 168.3 L1079.6 168.2 L1032.0 169.0 L1079.6 169.2 L1032.0 170.2 L1079.6 170.7 L1032.1 172.0 L1079.6 172.6 L1032.1 174.1 L1079.6 175.0 L1032.2 176.7 L1079.6 177.7 L1032.2 179.6 L1079.6 180.8 L1032.3 182.9 L1079.6 184.3 L1032.4 186.5 L1079.5 187.9 L1032.5 190.3 L1079.5 191.8 L1032.5 194.3 L1079.5 195.9 L1032.6 198.4 L1079.5 200.0 L1032.7 202.5 L1079.5 204.2 L1032.8 206.7 L1079.5 208.3 L1032.9 210.8 L1079.5 212.3 L1033.0 214.7 L1079.5 216.2 L1033.1 218.5 L1079.5 219.9 L1033.1 222.1 L1079.4 223.3 L1033.2 225.4 L1079.4 226.4 L1033.3 228.3 L1079.4 229.2 L1033.3 230.9 L1079.4 231.5 L1033.4 233.1 L1079.4 233.5 L1033.4 234.8 L1079.4 234.9 L1033.4 236.0 L1079.4 235.9 L1033.5 236.8 L1079.4 236.4M1126.2 168.0 L1079.6 167.9 L1126.2 168.5 L1079.6 168.7 L1126.2 169.5 L1079.6 169.9 L1126.2 170.9 L1079.6 171.6 L1126.2 172.9 L1079.6 173.7 L1126.2 175.2 L1079.6 176.3 L1126.2 178.0 L1079.6 179.2 L1126.2 181.1 L1079.6 182.5 L1126.2 184.5 L1079.5 186.1 L1126.2 188.2 L1079.5 189.9 L1126.2 192.0 L1079.5 193.8 L1126.2 196.1 L1079.5 197.9 L1126.2 200.2 L1079.5 202.1 L1126.2 204.3 L1079.5 206.2 L1126.2 208.4 L1079.5 210.3 L1126.2 212.5 L1079.5 214.3 L1126.2 216.3 L1079.5 218.1 L1126.2 220.0 L1079.5 221.6 L1126.2 223.4 L1079.4 224.9 L1126.2 226.5 L1079.4 227.8 L1126.2 229.3 L1079.4 230.4 L1126.2 231.6 L1079.4 232.6 L1126.2 233.6 L1079.4 234.3 L1126.2 235.0 L1079.4 235.5 L1126.2 236.0 L1079.4 236.3 L1126.2 236.5" stroke="#100400" stroke-width="1" stroke-linejoin="bevel"/>
<path d="M640.3 598.0 L709.3 598.0M641.4 552.8 L710.2 554.8M642.9 517.5 L711.5 521.2M644.2 499.8 L712.5 505.0M645.7 482.7 L713.9 489.5M647.5 466.1 L715.6 474.8M649.7 450.7 L717.5 461.1M652.1 436.1 L719.6 448.6M654.9 422.3 L722.0 437.0M657.9 409.4 L724.5 426.0M661.2 397.2 L727.2 416.0M664.8 385.4 L730.1 406.5M668.8 374.0 L733.1 397.5M673.0 363.4 L736.3 388.9M677.4 353.3 L739.6 380.8M681.9 343.7 L743.1 373.0M686.5 334.8 L746.6 365.7M691.1 326.2 L750.1 358.9M695.6 318.5 L753.7 352.6M700.0 311.4 L757.1 346.7M704.3 304.6 L760.5 341.4M708.3 298.7 L763.7 336.4M712.1 293.2 L766.7 332.1M715.6 288.3 L769.7 328.0M719.1 283.7 L772.4 324.4M722.7 279.1 L775.2 320.8M726.1 274.9 L778.0 317.4M729.4 270.9 L780.6 314.3M732.7 266.9 L783.3 311.2M736.3 262.8 L786.2 308.1M739.8 259.0 L789.0 305.0M743.3 255.2 L792.0 302.0M747.0 251.3 L794.8 299.3M750.7 247.6 L797.8 296.4M754.5 243.8 L800.9 293.6M758.4 240.1 L803.9 291.0M762.2 236.6 L807.1 288.4M766.3 233.0 L810.2 285.9M770.6 229.4 L813.3 283.5M774.8 226.0 L816.4 281.2M779.1 222.7 L819.7 278.9M783.6 219.4 L822.9 276.8M788.3 216.2 L826.3 274.6M815.1 201.0 L844.7 264.7M841.3 190.8 L863.4 257.2M865.6 184.1 L881.8 251.9M888.0 179.6 L900.2 247.9M906.0 176.8 L915.7 245.4M923.3 174.7 L931.1 243.4M943.4 172.6 L949.6 241.5M963.2 171.0 L968.3 240.0M986.5 169.5 L990.2 238.6M1008.9 168.6 L1011.4 237.7M1032.0 168.0 L1033.5 237.0M1079.6 167.7 L1079.4 236.5M1126.2 167.9 L1126.2 236.6" stroke="#100400" stroke-width=".95"/>
</g>
<path d="M640.3 598.0 L640.5 583.4 L640.7 577.5 L640.8 571.6 L641.0 565.7 L641.1 559.6 L641.3 553.5 L641.5 547.6 L641.8 541.6 L642.0 535.4 L642.3 529.4 L642.6 523.2 L643.0 517.2 L643.4 511.0 L643.8 504.9 L644.2 498.8 L644.7 492.6 L645.3 486.4 L645.9 480.2 L646.6 474.0 L647.3 467.8 L648.1 461.6 L649.0 455.2 L649.9 449.1 L651.0 442.7 L652.1 436.6 L653.3 430.2 L654.5 423.9 L655.9 417.6 L657.4 411.4 L659.0 405.1 L660.7 398.9 L662.6 392.5 L664.5 386.4 L666.6 380.1 L668.9 373.8 L671.2 367.8 L673.7 361.6 L676.4 355.5 L679.1 349.7 L682.0 343.6 L684.9 337.9 L687.9 332.1 L691.1 326.2 L694.4 320.6 L697.7 315.0 L701.1 309.5 L704.8 303.9 L708.4 298.5 L712.2 293.1 L716.0 287.9 L720.1 282.4 L724.1 277.3 L728.2 272.3 L732.4 267.3 L736.9 262.2 L741.3 257.4 L745.9 252.4 L750.5 247.8 L755.3 243.1 L760.2 238.4 L765.2 234.0 L770.5 229.5 L775.8 225.2 L781.3 221.1 L787.0 217.1 L793.0 213.1 L798.9 209.5 L805.1 206.0 L811.4 202.8 L817.7 199.9 L824.2 197.1 L830.7 194.5 L837.0 192.3 L843.6 190.1 L850.0 188.2 L856.5 186.4 L863.0 184.7 L869.3 183.3 L875.7 181.9 L882.1 180.7 L888.5 179.5 L894.7 178.5 L901.1 177.5 L907.3 176.7 L913.5 175.8 L919.7 175.1 L925.7 174.4 L931.9 173.7 L938.1 173.1 L944.1 172.5 L950.2 172.0 L956.4 171.5 L962.5 171.0 L968.5 170.6 L974.7 170.2 L980.9 169.8 L986.8 169.5 L993.0 169.2 L998.9 169.0 L1005.0 168.7 L1011.2 168.5 L1017.1 168.3 L1023.3 168.2 L1029.2 168.1 L1035.2 167.9 L1041.3 167.8 L1047.3 167.8 L1053.4 167.7 L1059.4 167.7 L1065.3 167.7 L1071.3 167.6 L1077.2 167.6 L1083.2 167.7 L1089.1 167.7 L1095.1 167.7 L1101.1 167.8 L1107.1 167.8 L1113.1 167.9 L1126.2 167.9 L1126.2 236.6 L1112.6 236.5 L1106.8 236.5 L1100.9 236.5 L1094.9 236.5 L1089.2 236.5 L1083.2 236.5 L1077.4 236.5 L1071.6 236.5 L1065.6 236.6 L1059.9 236.6 L1054.1 236.7 L1048.1 236.8 L1042.4 236.8 L1036.6 237.0 L1030.7 237.1 L1024.9 237.2 L1019.2 237.4 L1013.4 237.6 L1007.7 237.8 L1001.9 238.0 L996.2 238.3 L990.4 238.6 L984.7 238.9 L978.9 239.2 L973.1 239.6 L967.6 240.0 L961.8 240.5 L956.2 240.9 L950.4 241.4 L944.8 242.0 L939.0 242.5 L933.4 243.2 L927.8 243.8 L922.2 244.5 L916.8 245.2 L911.3 246.1 L905.9 246.9 L900.6 247.8 L895.3 248.9 L890.0 250.0 L884.8 251.1 L879.8 252.4 L874.7 253.8 L869.8 255.2 L864.9 256.7 L860.1 258.4 L855.6 260.1 L850.9 261.9 L846.5 263.8 L842.1 265.9 L837.8 268.0 L833.7 270.3 L829.6 272.6 L825.4 275.2 L821.3 277.8 L817.3 280.6 L813.2 283.5 L809.3 286.6 L805.5 289.7 L801.4 293.2 L797.7 296.6 L794.0 300.1 L790.2 303.8 L786.7 307.5 L783.1 311.5 L779.7 315.3 L776.3 319.4 L773.1 323.5 L769.9 327.7 L766.8 332.0 L763.9 336.2 L760.9 340.7 L758.1 345.1 L755.3 349.7 L752.7 354.2 L750.1 358.9 L747.7 363.5 L745.3 368.3 L743.1 373.0 L740.9 377.9 L738.9 382.6 L736.8 387.6 L735.0 392.3 L733.2 397.4 L731.4 402.4 L729.9 407.3 L728.3 412.4 L726.8 417.5 L725.4 422.6 L724.1 427.8 L722.9 433.0 L721.7 438.4 L720.6 443.6 L719.6 449.0 L718.6 454.3 L717.7 459.8 L716.9 465.3 L716.1 470.8 L715.4 476.3 L714.7 481.8 L714.1 487.4 L713.6 492.9 L713.1 498.5 L712.6 504.1 L712.2 509.8 L711.8 515.4 L711.5 521.0 L711.2 526.8 L710.9 532.6 L710.7 538.3 L710.5 544.0 L710.3 549.8 L710.1 555.5 L710.0 561.5 L709.9 567.3 L709.7 573.1 L709.6 579.0 L709.5 585.0 L709.3 598.0Z" fill="none" stroke="#0a0300" stroke-width="1"/>
</g>
<!-- bbox -->
<g fill="none" stroke="#fff" stroke-width="1" stroke-opacity=".88">
<line x1="639.8" y1="167" x2="639.8" y2="599"/>
<line x1="1127.4" y1="167" x2="1127.4" y2="599"/>
<line x1="640" y1="167" x2="1127" y2="167" stroke-dasharray="3.9 1.5"/>
<line x1="640" y1="599" x2="1127" y2="599" stroke-dasharray="3.9 1.5"/>
</g>
<g fill="none" stroke="#fff" stroke-width=".9" opacity=".9">
<path d="M640.500 377 v7 h4 M646 379 l2 4 m2-4 l-3.200 7"/>
<path d="M886 591 v7 h4 M891.500 594 l4 4.500 m0-4.500 l-4 4.500"/>
<path d="M648 593.500 h3.500 l-3.500 4 h3.500"/>
<path d="M1271 64 v8 h5 M1277 66 l4 5 M1271 78 v8 h5 M1277 80 l2.500 4 M1271 90 v8 h5 M1277 92 h3 l-3 4 h3"/>
</g>
<!-- axes big -->
<line x1="630.600" y1="602" x2="630.600" y2="545" stroke="#3fe283" stroke-width="1.800"/>
<path d="M630.600 538.800 l2.100 19 h-4.200z" fill="#3fe283"/>
<line x1="633" y1="603" x2="680" y2="603" stroke="#f0707a" stroke-width="1.800"/>
<path d="M694.500 603 l-19 2 v-4z" fill="#f0707a"/>
<circle cx="630.400" cy="604" r="1.600" fill="#5a6ad8"/>
<g font-family="Liberation Sans" font-size="8.6" fill="#1f1f7a"><text x="631.6" y="537.4">Y</text><text x="631.6" y="603" font-size="9.2" font-weight="bold">Z</text><text x="696.2" y="604.2" font-size="7.5" fill="#3a2a5a">X</text></g>
<!-- axes small -->
<line x1="473.400" y1="671" x2="473.400" y2="641.500" stroke="#74e2a4" stroke-width="1.800"/>
<line x1="474" y1="670.800" x2="507.500" y2="670.800" stroke="#f27a7a" stroke-width="1.800"/>
<path d="M507.500 670.800 l-12 1.800 v-3z" fill="#f27a7a"/>
<circle cx="473" cy="671.600" r="1.400" fill="#6a7ad8"/>
<g font-family="Liberation Sans" font-size="9.500" fill="#111"><text x="473.600" y="638.300">Y</text><text x="473.800" y="670.800">Z</text><text x="506.600" y="670.800">X</text></g>
</svg>
<!-- bottom tab strip -->
<div class="abs" style="left:416px;top:710px;width:864px;height:10px;background:#f0f0f0;border-top:1px solid #c9c9c9"></div>
<div class="abs" style="left:416px;top:710px;width:467px;height:10px;background:#fdfdfd;border-right:1px solid #d5d5d5"></div>
<div class="t" style="left:628px;top:714px;font-size:11.3px">surface.sur*</div>
<svg class="abs" style="left:427px;top:714px" width="12" height="6" viewBox="0 0 12 6"><circle cx="6" cy="6" r="5.500" fill="#2a7fc0"/><path d="M2 4.500 q4-3 8 0" stroke="#cfe6f5" stroke-width="1.200" fill="none"/></svg>

<div id="shade" class="abs"></div>
<svg class="abs" style="left:1130px;top:25px" width="125" height="125" viewBox="1130 25 125 125">
<defs><mask id="wmm" maskUnits="userSpaceOnUse" x="1130" y="25" width="125" height="125">
<path d="M1139.700 66.800 L1150.400 64.900 L1152.400 57.100 L1153.300 53.200 L1150 45.400 L1154.300 41 L1170 36 L1192.300 34.700 L1196.100 37.600 L1198.100 44.500 L1200 45.900 Q1208 49 1215.600 55.200 Q1222.500 61.500 1227.300 68.800 Q1233 78 1235.500 87.300 L1236 92.600 L1235.500 106.300 L1241.900 117 L1234.600 130.100 L1224.400 124.300 L1215.100 128.600 L1214.100 142.300 L1196.100 142.300 L1191.800 128.600 L1176.700 122.300 L1167.500 128.600 L1152.200 112.100 L1157.700 102.400 L1151.900 87.800 L1139.200 82.400Z" fill="#fff" stroke="#fff" stroke-width="2" stroke-linejoin="round"/>
<ellipse cx="1199.300" cy="85.800" rx="34" ry="27.500" transform="rotate(50 1199.300 85.800)" fill="#000"/>
<path d="M1176.500 55 Q1186 47.500 1198.400 45.200" stroke="#000" stroke-width=".9" fill="none" opacity=".6"/>
</mask></defs>
<ellipse cx="1199.300" cy="85.800" rx="34" ry="27.500" transform="rotate(50 1199.300 85.800)" fill="#000028" opacity=".1"/>
<rect x="1130" y="25" width="125" height="125" fill="#fff" opacity=".63" mask="url(#wmm)"/>
</svg>

</body></html>
